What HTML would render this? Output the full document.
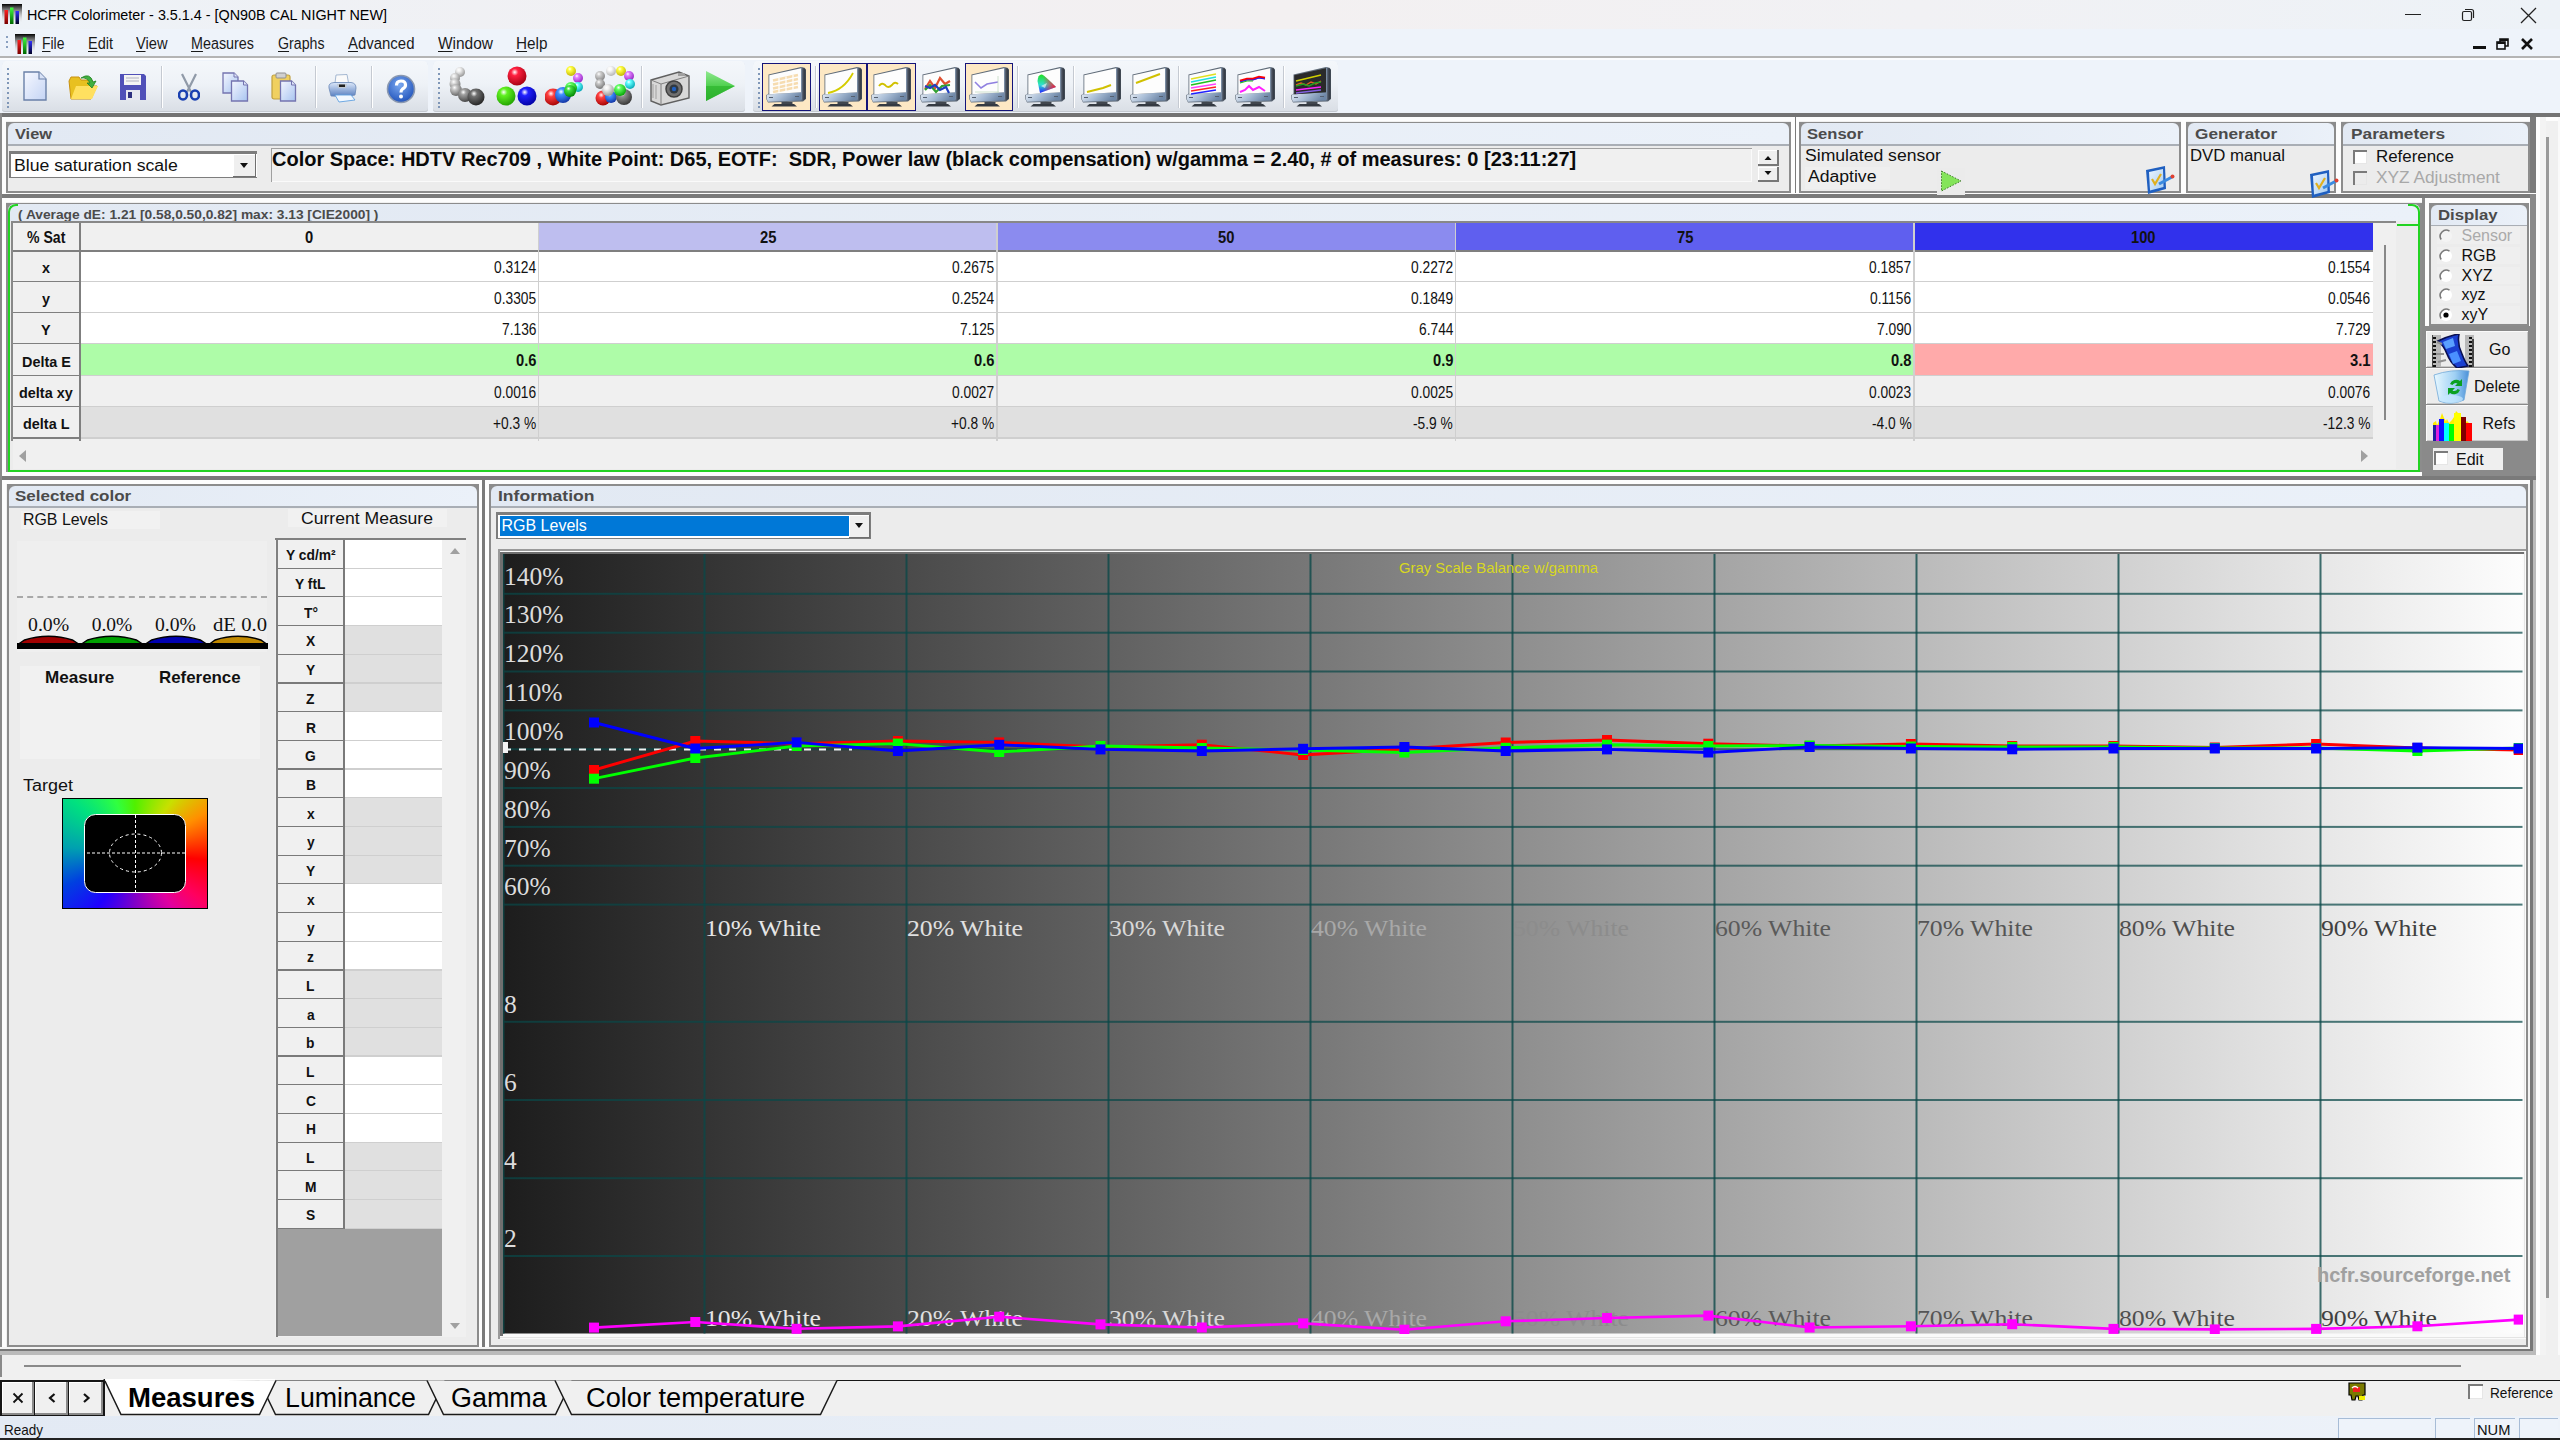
<!DOCTYPE html>
<html><head><meta charset="utf-8"><title>HCFR Colorimeter</title>
<style>
html,body{margin:0;padding:0;}
body{width:2560px;height:1440px;position:relative;overflow:hidden;background:#f0f0f0;font-family:"Liberation Sans",sans-serif;}
body>div,body>svg{position:absolute;}
div{box-sizing:border-box;}
u{text-decoration:underline;text-underline-offset:2px;text-decoration-thickness:1px;}
</style></head><body>
<div style="left:0;top:0;width:2560px;height:29px;background:linear-gradient(90deg,#edf2f7 0%,#f1f0f3 25%,#f3f0f1 50%,#f1f1f4 75%,#edf2f7 100%)"></div>
<svg style="position:absolute;left:2.0px;top:4.0px" width="20" height="20" viewBox="0 0 20 20"><defs><linearGradient id="ai2" x1="0" y1="0" x2="0" y2="1"><stop offset="0" stop-color="#000"/><stop offset="1" stop-color="#fff" stop-opacity="0"/></linearGradient><linearGradient id="ar2" x1="0" y1="0" x2="0" y2="1"><stop offset="0" stop-color="#ff2020"/><stop offset="1" stop-color="#700"/></linearGradient><linearGradient id="ag2" x1="0" y1="0" x2="0" y2="1"><stop offset="0" stop-color="#40ff40"/><stop offset="1" stop-color="#060"/></linearGradient><linearGradient id="ab2" x1="0" y1="0" x2="0" y2="1"><stop offset="0" stop-color="#3030ff"/><stop offset="1" stop-color="#002"/></linearGradient></defs><rect x="0" y="0" width="20" height="20" fill="url(#ai2)"/><rect x="2.5" y="6" width="3.5" height="14" fill="url(#ar2)"/><rect x="8" y="3.5" width="3.5" height="16.5" fill="url(#ag2)"/><rect x="13.5" y="7" width="3.5" height="13" fill="url(#ab2)"/></svg>
<div style="left:27.00px;top:7.30px;font:normal 15.00px/15.00px 'Liberation Sans',sans-serif;color:#000;white-space:pre;transform:scaleX(0.9576);transform-origin:0 0;">HCFR Colorimeter - 3.5.1.4 - [QN90B CAL NIGHT NEW]</div>
<div style="left:2405.00px;top:13.50px;width:16.00px;height:1.00px;background:#222;"></div>
<svg style="position:absolute;left:2459.00px;top:6.00px;" width="20" height="18" viewBox="0 0 20 18"><rect x="3.5" y="5.5" width="9" height="9" rx="1.5" fill="none" stroke="#222" stroke-width="1.2"/><path d="M6 3.5h6.5a2 2 0 0 1 2 2V12" fill="none" stroke="#222" stroke-width="1.2"/></svg>
<svg style="position:absolute;left:2518.00px;top:5.00px;" width="22" height="22" viewBox="0 0 22 22"><path d="M3 3L18 18M18 3L3 18" stroke="#222" stroke-width="1.3"/></svg>
<div style="left:0.00px;top:29.00px;width:2560.00px;height:27.00px;background:#eef3fa;"></div>
<div style="left:6.00px;top:36.00px;width:2.00px;height:2.00px;background:#8aa0c0;"></div>
<div style="left:6.00px;top:41.00px;width:2.00px;height:2.00px;background:#8aa0c0;"></div>
<div style="left:6.00px;top:46.00px;width:2.00px;height:2.00px;background:#8aa0c0;"></div>
<svg style="position:absolute;left:15.0px;top:34.0px" width="20" height="20" viewBox="0 0 20 20"><defs><linearGradient id="ai15" x1="0" y1="0" x2="0" y2="1"><stop offset="0" stop-color="#000"/><stop offset="1" stop-color="#fff" stop-opacity="0"/></linearGradient><linearGradient id="ar15" x1="0" y1="0" x2="0" y2="1"><stop offset="0" stop-color="#ff2020"/><stop offset="1" stop-color="#700"/></linearGradient><linearGradient id="ag15" x1="0" y1="0" x2="0" y2="1"><stop offset="0" stop-color="#40ff40"/><stop offset="1" stop-color="#060"/></linearGradient><linearGradient id="ab15" x1="0" y1="0" x2="0" y2="1"><stop offset="0" stop-color="#3030ff"/><stop offset="1" stop-color="#002"/></linearGradient></defs><rect x="0" y="0" width="20" height="20" fill="url(#ai15)"/><rect x="2.5" y="6" width="3.5" height="14" fill="url(#ar15)"/><rect x="8" y="3.5" width="3.5" height="16.5" fill="url(#ag15)"/><rect x="13.5" y="7" width="3.5" height="13" fill="url(#ab15)"/></svg>
<div style="left:41.50px;top:36.46px;font:normal 16.00px/16.00px 'Liberation Sans',sans-serif;color:#1a1a1a;white-space:pre;transform:scaleX(0.8717);transform-origin:0 0;"><u>F</u>ile</div>
<div style="left:87.50px;top:36.46px;font:normal 16.00px/16.00px 'Liberation Sans',sans-serif;color:#1a1a1a;white-space:pre;transform:scaleX(0.9060);transform-origin:0 0;"><u>E</u>dit</div>
<div style="left:136.00px;top:36.46px;font:normal 16.00px/16.00px 'Liberation Sans',sans-serif;color:#1a1a1a;white-space:pre;transform:scaleX(0.9151);transform-origin:0 0;"><u>V</u>iew</div>
<div style="left:191.00px;top:36.46px;font:normal 16.00px/16.00px 'Liberation Sans',sans-serif;color:#1a1a1a;white-space:pre;transform:scaleX(0.8964);transform-origin:0 0;"><u>M</u>easures</div>
<div style="left:277.50px;top:36.46px;font:normal 16.00px/16.00px 'Liberation Sans',sans-serif;color:#1a1a1a;white-space:pre;transform:scaleX(0.8857);transform-origin:0 0;"><u>G</u>raphs</div>
<div style="left:347.50px;top:36.46px;font:normal 16.00px/16.00px 'Liberation Sans',sans-serif;color:#1a1a1a;white-space:pre;transform:scaleX(0.9339);transform-origin:0 0;"><u>A</u>dvanced</div>
<div style="left:437.50px;top:36.46px;font:normal 16.00px/16.00px 'Liberation Sans',sans-serif;color:#1a1a1a;white-space:pre;transform:scaleX(0.9657);transform-origin:0 0;"><u>W</u>indow</div>
<div style="left:516.00px;top:36.46px;font:normal 16.00px/16.00px 'Liberation Sans',sans-serif;color:#1a1a1a;white-space:pre;transform:scaleX(0.9564);transform-origin:0 0;"><u>H</u>elp</div>
<div style="left:2473.00px;top:46.00px;width:13.00px;height:3.00px;background:#111;"></div>
<svg style="position:absolute;left:2495.00px;top:36.00px;" width="16" height="16" viewBox="0 0 16 16"><rect x="2" y="6" width="8" height="7" fill="none" stroke="#111" stroke-width="1.6"/><path d="M5 6V3h8v7h-3" fill="none" stroke="#111" stroke-width="1.6"/><rect x="2" y="6" width="8" height="2" fill="#111"/><rect x="5" y="3" width="8" height="2" fill="#111"/></svg>
<svg style="position:absolute;left:2519.00px;top:36.00px;" width="16" height="16" viewBox="0 0 16 16"><path d="M3 3L13 13M13 3L3 13" stroke="#111" stroke-width="2.6"/></svg>
<div style="left:0.00px;top:56.00px;width:2560.00px;height:2.00px;background:#b4b4b4;"></div>
<div style="left:0.00px;top:58.00px;width:2560.00px;height:2.00px;background:#fbfcfe;"></div>
<div style="left:0.00px;top:60.00px;width:2560.00px;height:53.00px;background:#eef3fa;"></div>
<div style="left:2px;top:61px;width:426px;height:51px;border-radius:5px 5px 3px 3px;background:linear-gradient(180deg,#f4f7fb 0%,#eef2f7 45%,#d9dee5 100%);box-shadow:inset 0 -1px 0 #c4c9d0"></div>
<div style="left:7.00px;top:68.00px;width:2.00px;height:2.00px;background:#7f97b8;"></div>
<div style="left:7.00px;top:72.80px;width:2.00px;height:2.00px;background:#7f97b8;"></div>
<div style="left:7.00px;top:77.60px;width:2.00px;height:2.00px;background:#7f97b8;"></div>
<div style="left:7.00px;top:82.40px;width:2.00px;height:2.00px;background:#7f97b8;"></div>
<div style="left:7.00px;top:87.20px;width:2.00px;height:2.00px;background:#7f97b8;"></div>
<div style="left:7.00px;top:92.00px;width:2.00px;height:2.00px;background:#7f97b8;"></div>
<div style="left:7.00px;top:96.80px;width:2.00px;height:2.00px;background:#7f97b8;"></div>
<div style="left:7.00px;top:101.60px;width:2.00px;height:2.00px;background:#7f97b8;"></div>
<div style="left:7.00px;top:106.40px;width:2.00px;height:2.00px;background:#7f97b8;"></div>
<div style="left:433px;top:61px;width:312px;height:51px;border-radius:5px 5px 3px 3px;background:linear-gradient(180deg,#f4f7fb 0%,#eef2f7 45%,#d9dee5 100%);box-shadow:inset 0 -1px 0 #c4c9d0"></div>
<div style="left:438.00px;top:68.00px;width:2.00px;height:2.00px;background:#7f97b8;"></div>
<div style="left:438.00px;top:72.80px;width:2.00px;height:2.00px;background:#7f97b8;"></div>
<div style="left:438.00px;top:77.60px;width:2.00px;height:2.00px;background:#7f97b8;"></div>
<div style="left:438.00px;top:82.40px;width:2.00px;height:2.00px;background:#7f97b8;"></div>
<div style="left:438.00px;top:87.20px;width:2.00px;height:2.00px;background:#7f97b8;"></div>
<div style="left:438.00px;top:92.00px;width:2.00px;height:2.00px;background:#7f97b8;"></div>
<div style="left:438.00px;top:96.80px;width:2.00px;height:2.00px;background:#7f97b8;"></div>
<div style="left:438.00px;top:101.60px;width:2.00px;height:2.00px;background:#7f97b8;"></div>
<div style="left:438.00px;top:106.40px;width:2.00px;height:2.00px;background:#7f97b8;"></div>
<div style="left:753px;top:61px;width:585px;height:51px;border-radius:5px 5px 3px 3px;background:linear-gradient(180deg,#f4f7fb 0%,#eef2f7 45%,#d9dee5 100%);box-shadow:inset 0 -1px 0 #c4c9d0"></div>
<div style="left:758.00px;top:68.00px;width:2.00px;height:2.00px;background:#7f97b8;"></div>
<div style="left:758.00px;top:72.80px;width:2.00px;height:2.00px;background:#7f97b8;"></div>
<div style="left:758.00px;top:77.60px;width:2.00px;height:2.00px;background:#7f97b8;"></div>
<div style="left:758.00px;top:82.40px;width:2.00px;height:2.00px;background:#7f97b8;"></div>
<div style="left:758.00px;top:87.20px;width:2.00px;height:2.00px;background:#7f97b8;"></div>
<div style="left:758.00px;top:92.00px;width:2.00px;height:2.00px;background:#7f97b8;"></div>
<div style="left:758.00px;top:96.80px;width:2.00px;height:2.00px;background:#7f97b8;"></div>
<div style="left:758.00px;top:101.60px;width:2.00px;height:2.00px;background:#7f97b8;"></div>
<div style="left:758.00px;top:106.40px;width:2.00px;height:2.00px;background:#7f97b8;"></div>
<div style="left:161.00px;top:66.00px;width:1.00px;height:42.00px;background:#c5cad2;"></div>
<div style="left:162.00px;top:66.00px;width:1.00px;height:42.00px;background:#ffffff;"></div>
<div style="left:315.00px;top:66.00px;width:1.00px;height:42.00px;background:#c5cad2;"></div>
<div style="left:316.00px;top:66.00px;width:1.00px;height:42.00px;background:#ffffff;"></div>
<div style="left:371.00px;top:66.00px;width:1.00px;height:42.00px;background:#c5cad2;"></div>
<div style="left:372.00px;top:66.00px;width:1.00px;height:42.00px;background:#ffffff;"></div>
<div style="left:641.00px;top:66.00px;width:1.00px;height:42.00px;background:#c5cad2;"></div>
<div style="left:642.00px;top:66.00px;width:1.00px;height:42.00px;background:#ffffff;"></div>
<div style="left:1017.00px;top:66.00px;width:1.00px;height:42.00px;background:#c5cad2;"></div>
<div style="left:1018.00px;top:66.00px;width:1.00px;height:42.00px;background:#ffffff;"></div>
<div style="left:1073.00px;top:66.00px;width:1.00px;height:42.00px;background:#c5cad2;"></div>
<div style="left:1074.00px;top:66.00px;width:1.00px;height:42.00px;background:#ffffff;"></div>
<div style="left:1178.00px;top:66.00px;width:1.00px;height:42.00px;background:#c5cad2;"></div>
<div style="left:1179.00px;top:66.00px;width:1.00px;height:42.00px;background:#ffffff;"></div>
<div style="left:1283.00px;top:66.00px;width:1.00px;height:42.00px;background:#c5cad2;"></div>
<div style="left:1284.00px;top:66.00px;width:1.00px;height:42.00px;background:#ffffff;"></div>
<div style="left:815.00px;top:66.00px;width:1.00px;height:42.00px;background:#c5cad2;"></div>
<div style="left:816.00px;top:66.00px;width:1.00px;height:42.00px;background:#ffffff;"></div>
<div style="left:0.00px;top:113.00px;width:2560.00px;height:4.00px;background:#737373;"></div>
<div style="left:0.00px;top:117.00px;width:2560.00px;height:4.00px;background:#fdfdfd;"></div>
<div style="left:6.00px;top:121.50px;width:1785.00px;height:71.50px;background:#8c8c8c;"></div>
<div style="left:8.0px;top:123.0px;width:1781.0px;height:21.0px;background:linear-gradient(90deg,#e2e9f3,#ebf1f9);border-radius:6px 6px 0 0"></div>
<div style="left:8.00px;top:144.00px;width:1781.00px;height:1.50px;background:#a9aeb5;"></div>
<div style="left:8.00px;top:145.50px;width:1781.00px;height:45.50px;background:#ececec;"></div>
<div style="left:15.00px;top:127.23px;font:bold 14.50px/14.50px 'Liberation Sans',sans-serif;color:#4b4b4b;white-space:pre;transform:scaleX(1.1287);transform-origin:0 0;">View</div>
<div style="left:8.50px;top:150.50px;width:248.50px;height:27.50px;background:#7d7d7d;"></div>
<div style="left:11.00px;top:153.50px;width:246.00px;height:23.50px;background:#ffffff;"></div>
<div style="left:233.00px;top:153.50px;width:23.00px;height:23.50px;background:#efefef;"></div>
<div style="left:233px;top:153.5px;width:23px;height:23.5px;box-shadow:inset -1px -1px 0 #6f6f6f,inset 1px 1px 0 #fff"></div>
<svg style="position:absolute;left:236.00px;top:159.00px;" width="16" height="12" viewBox="0 0 16 12"><path d="M4 4h8l-4 5z" fill="#111"/></svg>
<div style="left:14.00px;top:158.46px;font:normal 16.00px/16.00px 'Liberation Sans',sans-serif;color:#111;white-space:pre;transform:scaleX(1.1032);transform-origin:0 0;">Blue saturation scale</div>
<div style="left:270.50px;top:148.00px;width:1481.50px;height:33.50px;background:#f0f0f0;box-shadow:inset 1px 1px 0 #a0a0a0,inset -1px -1px 0 #fafafa"></div>
<div style="left:272.00px;top:149.47px;font:bold 20.00px/20.00px 'Liberation Sans',sans-serif;color:#0a0a0a;white-space:pre;">Color Space: HDTV Rec709 , White Point: D65, EOTF:  SDR, Power law (black compensation) w/gamma = 2.40, # of measures: 0 [23:11:27]</div>
<div style="left:1757.50px;top:150.00px;width:21.00px;height:15.50px;background:#efefef;box-shadow:inset -2px -2px 0 #777,inset 1px 1px 0 #fff"></div>
<svg style="position:absolute;left:1762.00px;top:153.00px;" width="12" height="9" viewBox="0 0 12 9"><path d="M2.5 7h7L6 3z" fill="#111"/></svg>
<div style="left:1757.50px;top:167.00px;width:21.00px;height:14.50px;background:#efefef;box-shadow:inset -2px -2px 0 #777,inset 1px 1px 0 #fff"></div>
<svg style="position:absolute;left:1762.00px;top:169.00px;" width="12" height="9" viewBox="0 0 12 9"><path d="M2.5 2h7L6 6z" fill="#111"/></svg>
<div style="left:1791.00px;top:117.00px;width:3.50px;height:78.00px;background:#fdfdfd;"></div>
<div style="left:1794.50px;top:117.00px;width:1.50px;height:78.00px;background:#7a7a7a;"></div>
<div style="left:1796.00px;top:117.00px;width:3.00px;height:78.00px;background:#fdfdfd;"></div>
<div style="left:1799.00px;top:121.50px;width:382.00px;height:71.50px;background:#8c8c8c;"></div>
<div style="left:1801.0px;top:123.0px;width:378.0px;height:21.0px;background:linear-gradient(90deg,#e2e9f3,#ebf1f9);border-radius:6px 6px 0 0"></div>
<div style="left:1801.00px;top:144.00px;width:378.00px;height:1.50px;background:#a9aeb5;"></div>
<div style="left:1801.00px;top:145.50px;width:378.00px;height:45.50px;background:#ececec;"></div>
<div style="left:1807.40px;top:127.23px;font:bold 14.50px/14.50px 'Liberation Sans',sans-serif;color:#4b4b4b;white-space:pre;transform:scaleX(1.1433);transform-origin:0 0;">Sensor</div>
<div style="left:1805.00px;top:147.96px;font:normal 16.00px/16.00px 'Liberation Sans',sans-serif;color:#111;white-space:pre;transform:scaleX(1.0994);transform-origin:0 0;">Simulated sensor</div>
<div style="left:1805.00px;top:167.00px;width:85.00px;height:22.00px;background:#efefef;"></div>
<div style="left:1807.50px;top:169.46px;font:normal 16.00px/16.00px 'Liberation Sans',sans-serif;color:#111;white-space:pre;transform:scaleX(1.0993);transform-origin:0 0;">Adaptive</div>
<div style="left:2181.00px;top:117.00px;width:5.00px;height:78.00px;background:#fdfdfd;"></div>
<div style="left:2186.00px;top:121.50px;width:149.50px;height:71.50px;background:#8c8c8c;"></div>
<div style="left:2188.0px;top:123.0px;width:145.5px;height:21.0px;background:linear-gradient(90deg,#e2e9f3,#ebf1f9);border-radius:6px 6px 0 0"></div>
<div style="left:2188.00px;top:144.00px;width:145.50px;height:1.50px;background:#a9aeb5;"></div>
<div style="left:2188.00px;top:145.50px;width:145.50px;height:45.50px;background:#ececec;"></div>
<div style="left:2195.40px;top:127.23px;font:bold 14.50px/14.50px 'Liberation Sans',sans-serif;color:#4b4b4b;white-space:pre;transform:scaleX(1.1862);transform-origin:0 0;">Generator</div>
<div style="left:2190.00px;top:148.46px;font:normal 16.00px/16.00px 'Liberation Sans',sans-serif;color:#111;white-space:pre;transform:scaleX(1.0467);transform-origin:0 0;">DVD manual</div>
<div style="left:2335.50px;top:117.00px;width:5.00px;height:78.00px;background:#fdfdfd;"></div>
<div style="left:2340.50px;top:121.50px;width:189.50px;height:71.50px;background:#8c8c8c;"></div>
<div style="left:2342.5px;top:123.0px;width:185.5px;height:21.0px;background:linear-gradient(90deg,#e2e9f3,#ebf1f9);border-radius:6px 6px 0 0"></div>
<div style="left:2342.50px;top:144.00px;width:185.50px;height:1.50px;background:#a9aeb5;"></div>
<div style="left:2342.50px;top:145.50px;width:185.50px;height:45.50px;background:#ececec;"></div>
<div style="left:2350.60px;top:127.23px;font:bold 14.50px/14.50px 'Liberation Sans',sans-serif;color:#4b4b4b;white-space:pre;transform:scaleX(1.1914);transform-origin:0 0;">Parameters</div>
<div style="left:2352.50px;top:149.50px;width:14.00px;height:14.00px;background:#ffffff;box-shadow:inset 2px 2px 0 #7b7b7b,inset -1px -1px 0 #e6e6e6"></div>
<div style="left:2376.00px;top:148.96px;font:normal 16.00px/16.00px 'Liberation Sans',sans-serif;color:#111;white-space:pre;transform:scaleX(1.0558);transform-origin:0 0;">Reference</div>
<div style="left:2352.50px;top:170.50px;width:14.00px;height:14.00px;background:#ececec;box-shadow:inset 2px 2px 0 #7b7b7b,inset -1px -1px 0 #e6e6e6"></div>
<div style="left:2376.00px;top:170.46px;font:normal 16.00px/16.00px 'Liberation Sans',sans-serif;color:#a8a8a8;white-space:pre;transform:scaleX(1.0802);transform-origin:0 0;">XYZ Adjustment</div>
<div style="left:2530.00px;top:117.00px;width:6.00px;height:82.00px;background:#7a7a7a;"></div>
<div style="left:0.00px;top:193.00px;width:2536.00px;height:1.40px;background:#fdfdfd;"></div>
<div style="left:0.00px;top:194.40px;width:2536.00px;height:4.00px;background:#7a7a7a;"></div>
<div style="left:0.00px;top:198.40px;width:2536.00px;height:4.10px;background:#fdfdfd;"></div>
<div style="left:1937.20px;top:168.00px;width:27.80px;height:27.00px;background:#ebebeb;"></div>
<svg style="position:absolute;left:1938.00px;top:168.00px;" width="28" height="26" viewBox="0 0 28 26"><path d="M3.5 3L23 13L3.5 23z" fill="#84e45a" stroke="#3c7a28" stroke-width="1" stroke-dasharray="1.5 1.5"/></svg>
<svg style="position:absolute;left:2144.00px;top:164.00px;" width="32" height="32" viewBox="0 0 32 32"><defs><linearGradient id="eg2144" x1="0" y1="0" x2="1" y2="1"><stop offset="0" stop-color="#eaf4ff"/><stop offset="1" stop-color="#a8cdf0"/></linearGradient></defs><path d="M2 6L21 2L22 25L4 30z" fill="#1f5fc0"/><path d="M5 8L19 5L19.5 23L6 26.5z" fill="url(#eg2144)"/><path d="M8 15l3 5l6-10" fill="none" stroke="#e0b020" stroke-width="2.2"/><path d="M15 20L28 13" stroke="#3a8ae0" stroke-width="3"/><circle cx="28.5" cy="12.5" r="2" fill="#e04030"/></svg>
<svg style="position:absolute;left:2307.50px;top:168.00px;" width="32" height="32" viewBox="0 0 32 32"><defs><linearGradient id="eg2307" x1="0" y1="0" x2="1" y2="1"><stop offset="0" stop-color="#eaf4ff"/><stop offset="1" stop-color="#a8cdf0"/></linearGradient></defs><path d="M2 6L21 2L22 25L4 30z" fill="#1f5fc0"/><path d="M5 8L19 5L19.5 23L6 26.5z" fill="url(#eg2307)"/><path d="M8 15l3 5l6-10" fill="none" stroke="#e0b020" stroke-width="2.2"/><path d="M15 20L28 13" stroke="#3a8ae0" stroke-width="3"/><circle cx="28.5" cy="12.5" r="2" fill="#e04030"/></svg>
<svg style="position:absolute;left:23.00px;top:71.00px;" width="24" height="30" viewBox="0 0 24 30"><defs><linearGradient id="g1" x1="0" y1="0" x2="1" y2="1"><stop offset="0" stop-color="#f6f8ff"/><stop offset="1" stop-color="#c4d4f4"/></linearGradient></defs><path d="M1 1H16L23 8V29H1z" fill="url(#g1)" stroke="#6a80a8" stroke-width="1.4"/><path d="M16 1V8H23" fill="#d8e2f6" stroke="#6a80a8" stroke-width="1.2"/></svg>
<svg style="position:absolute;left:68.00px;top:73.00px;" width="32" height="28" viewBox="0 0 32 28"><path d="M1 8L3 4H11L13 7H24V13L29 13L23 26H3z" fill="#e8c020" stroke="#c89010" stroke-width="1"/><path d="M3 26L8 13H30L24 26z" fill="#ffe060"/><path d="M13 5Q22 -1 25 9L28 8L24 15L19 10L22 10Q19 4 13 5z" fill="#40b040" stroke="#208020" stroke-width="0.8"/></svg>
<svg style="position:absolute;left:119.00px;top:73.00px;" width="28" height="28" viewBox="0 0 28 28"><path d="M1 1H25L27 3V27H1z" fill="#5050b8"/><rect x="5" y="2" width="17" height="10" fill="#f4f4f4"/><path d="M7 5H20M7 8H20" stroke="#b0b0c0" stroke-width="1"/><rect x="7" y="17" width="14" height="10" fill="#e8e8f0"/><rect x="9" y="19" width="4" height="6" fill="#303080"/></svg>
<svg style="position:absolute;left:178.00px;top:73.00px;" width="22" height="28" viewBox="0 0 22 28"><path d="M4 1L13 19M18 1L9 19" stroke="#909aa8" stroke-width="2.2"/><ellipse cx="5" cy="22" rx="4" ry="4.5" fill="none" stroke="#1a40b0" stroke-width="2.6"/><ellipse cx="17" cy="22" rx="4" ry="4.5" fill="none" stroke="#1a40b0" stroke-width="2.6"/></svg>
<svg style="position:absolute;left:222.00px;top:72.00px;" width="28" height="30" viewBox="0 0 28 30"><defs><linearGradient id="g2" x1="0" y1="0" x2="1" y2="1"><stop offset="0" stop-color="#f4f6ff"/><stop offset="1" stop-color="#a8c4f0"/></linearGradient></defs><path d="M1.0 1.0H12.0L16.0 5.0V21.0H1.0z" fill="url(#g2)" stroke="#7474b0" stroke-width="1.3"/><path d="M12.0 1.0V5.0H16.0" fill="#dde4f8" stroke="#7474b0" stroke-width="1"/><defs><linearGradient id="g3" x1="0" y1="0" x2="1" y2="1"><stop offset="0" stop-color="#f4f6ff"/><stop offset="1" stop-color="#a8c4f0"/></linearGradient></defs><path d="M9.5 9.0H21.5L25.5 13.0V29.0H9.5z" fill="url(#g3)" stroke="#7474b0" stroke-width="1.3"/><path d="M21.5 9.0V13.0H25.5" fill="#dde4f8" stroke="#7474b0" stroke-width="1"/></svg>
<svg style="position:absolute;left:271.00px;top:72.00px;" width="28" height="30" viewBox="0 0 28 30"><rect x="1" y="3" width="18" height="24" rx="2" fill="#f0d060" stroke="#c0a040" stroke-width="1.2"/><rect x="5" y="1" width="10" height="5" rx="1" fill="#d0d0d0" stroke="#909090"/><defs><linearGradient id="g4" x1="0" y1="0" x2="1" y2="1"><stop offset="0" stop-color="#f4f6ff"/><stop offset="1" stop-color="#a8c4f0"/></linearGradient></defs><path d="M9.5 9.0H20.5L24.5 13.0V29.0H9.5z" fill="url(#g4)" stroke="#7474b0" stroke-width="1.3"/><path d="M20.5 9.0V13.0H24.5" fill="#dde4f8" stroke="#7474b0" stroke-width="1"/></svg>
<svg style="position:absolute;left:327.00px;top:73.00px;" width="30" height="30" viewBox="0 0 30 30"><defs><linearGradient id="g5" x1="0" y1="0" x2="0" y2="1"><stop offset="0" stop-color="#dce8fa"/><stop offset="1" stop-color="#5a80c0"/></linearGradient></defs><path d="M9 2L20 1.5L21.5 10H8z" fill="#fafafa" stroke="#90a8c8" stroke-width="0.8"/><path d="M2 15Q1 10 7 9.5H24Q29 10 29 15L28 22Q20 24 4 23z" fill="url(#g5)" stroke="#6a88b8" stroke-width="0.8"/><path d="M10 11H20L19 15H11z" fill="#c0c8d0"/><rect x="12" y="11.5" width="6" height="2.5" fill="#202020"/><path d="M8 22H24L28 27L12 29z" fill="#f2f8ff" stroke="#60a0e0" stroke-width="0.9"/></svg>
<svg style="position:absolute;left:386.00px;top:74.00px;" width="30" height="30" viewBox="0 0 30 30"><defs><radialGradient id="g6" cx="0.45" cy="0.35" r="0.7"><stop offset="0" stop-color="#7aa8f0"/><stop offset="1" stop-color="#1d4fb8"/></radialGradient></defs><circle cx="15" cy="15" r="13.5" fill="url(#g6)" stroke="#8a98b0" stroke-width="1.6"/><path d="M10.5 11.5Q10.5 7 15 7Q19.5 7 19.5 11Q19.5 13.5 16.5 15Q15 16 15 18.5" fill="none" stroke="#fff" stroke-width="3.2"/><circle cx="15" cy="22.5" r="2" fill="#fff"/></svg>
<svg style="position:absolute;left:446.50px;top:66.00px;" width="42" height="41" viewBox="0 0 42 41"><defs><radialGradient id="g7" cx="0.38" cy="0.3" r="0.75"><stop offset="0" stop-color="#ffffff"/><stop offset="0.25" stop-color="#f0f0f0"/><stop offset="1" stop-color="#909090"/></radialGradient></defs><circle cx="13.0" cy="6.0" r="5.0" fill="url(#g7)"/><defs><radialGradient id="g8" cx="0.38" cy="0.3" r="0.75"><stop offset="0" stop-color="#ffffff"/><stop offset="0.25" stop-color="#e0e0e0"/><stop offset="1" stop-color="#808080"/></radialGradient></defs><circle cx="8.0" cy="12.0" r="5.0" fill="url(#g8)"/><defs><radialGradient id="g9" cx="0.38" cy="0.3" r="0.75"><stop offset="0" stop-color="#ffffff"/><stop offset="0.25" stop-color="#d8d8d8"/><stop offset="1" stop-color="#707070"/></radialGradient></defs><circle cx="8.0" cy="18.0" r="5.5" fill="url(#g9)"/><defs><radialGradient id="g10" cx="0.38" cy="0.3" r="0.75"><stop offset="0" stop-color="#ffffff"/><stop offset="0.25" stop-color="#c8c8c8"/><stop offset="1" stop-color="#606060"/></radialGradient></defs><circle cx="9.0" cy="24.0" r="6.0" fill="url(#g10)"/><defs><radialGradient id="g11" cx="0.38" cy="0.3" r="0.75"><stop offset="0" stop-color="#ffffff"/><stop offset="0.25" stop-color="#a0a0a0"/><stop offset="1" stop-color="#404040"/></radialGradient></defs><circle cx="18.0" cy="29.0" r="7.0" fill="url(#g11)"/><defs><radialGradient id="g12" cx="0.38" cy="0.3" r="0.75"><stop offset="0" stop-color="#ffffff"/><stop offset="0.25" stop-color="#707070"/><stop offset="1" stop-color="#202020"/></radialGradient></defs><circle cx="29.0" cy="31.0" r="8.5" fill="url(#g12)"/></svg>
<svg style="position:absolute;left:495.50px;top:66.00px;" width="42" height="41" viewBox="0 0 42 41"><defs><radialGradient id="g13" cx="0.38" cy="0.3" r="0.75"><stop offset="0" stop-color="#ffffff"/><stop offset="0.25" stop-color="#ff2040"/><stop offset="1" stop-color="#a00010"/></radialGradient></defs><circle cx="21.0" cy="10.0" r="9.5" fill="url(#g13)"/><defs><radialGradient id="g14" cx="0.38" cy="0.3" r="0.75"><stop offset="0" stop-color="#ffffff"/><stop offset="0.25" stop-color="#60f020"/><stop offset="1" stop-color="#20a000"/></radialGradient></defs><circle cx="10.0" cy="30.0" r="9.5" fill="url(#g14)"/><defs><radialGradient id="g15" cx="0.38" cy="0.3" r="0.75"><stop offset="0" stop-color="#ffffff"/><stop offset="0.25" stop-color="#2020ff"/><stop offset="1" stop-color="#0000a0"/></radialGradient></defs><circle cx="31.0" cy="30.0" r="9.5" fill="url(#g15)"/></svg>
<svg style="position:absolute;left:544.50px;top:66.00px;" width="42" height="41" viewBox="0 0 42 41"><defs><radialGradient id="g16" cx="0.38" cy="0.3" r="0.75"><stop offset="0" stop-color="#ffffff"/><stop offset="0.25" stop-color="#ffff40"/><stop offset="1" stop-color="#c0b000"/></radialGradient></defs><circle cx="26.0" cy="5.0" r="5.0" fill="url(#g16)"/><defs><radialGradient id="g17" cx="0.38" cy="0.3" r="0.75"><stop offset="0" stop-color="#ffffff"/><stop offset="0.25" stop-color="#e080ff"/><stop offset="1" stop-color="#9020c0"/></radialGradient></defs><circle cx="33.0" cy="12.0" r="5.0" fill="url(#g17)"/><defs><radialGradient id="g18" cx="0.38" cy="0.3" r="0.75"><stop offset="0" stop-color="#ffffff"/><stop offset="0.25" stop-color="#60ffff"/><stop offset="1" stop-color="#00a0b0"/></radialGradient></defs><circle cx="33.0" cy="21.0" r="5.0" fill="url(#g18)"/><defs><radialGradient id="g19" cx="0.38" cy="0.3" r="0.75"><stop offset="0" stop-color="#ffffff"/><stop offset="0.25" stop-color="#60ff60"/><stop offset="1" stop-color="#00a000"/></radialGradient></defs><circle cx="26.0" cy="22.0" r="6.0" fill="url(#g19)"/><defs><radialGradient id="g20" cx="0.38" cy="0.3" r="0.75"><stop offset="0" stop-color="#ffffff"/><stop offset="0.25" stop-color="#ff4040"/><stop offset="1" stop-color="#a00000"/></radialGradient></defs><circle cx="8.0" cy="31.0" r="8.5" fill="url(#g20)"/><defs><radialGradient id="g21" cx="0.38" cy="0.3" r="0.75"><stop offset="0" stop-color="#ffffff"/><stop offset="0.25" stop-color="#4090ff"/><stop offset="1" stop-color="#1030a0"/></radialGradient></defs><circle cx="18.0" cy="29.0" r="8.0" fill="url(#g21)"/><defs><radialGradient id="g22" cx="0.38" cy="0.3" r="0.75"><stop offset="0" stop-color="#ffffff"/><stop offset="0.25" stop-color="#40e040"/><stop offset="1" stop-color="#008000"/></radialGradient></defs><circle cx="25.0" cy="25.0" r="6.0" fill="url(#g22)"/></svg>
<svg style="position:absolute;left:593.50px;top:66.00px;" width="42" height="41" viewBox="0 0 42 41"><defs><radialGradient id="g23" cx="0.38" cy="0.3" r="0.75"><stop offset="0" stop-color="#ffffff"/><stop offset="0.25" stop-color="#d0d0d0"/><stop offset="1" stop-color="#808080"/></radialGradient></defs><circle cx="6.0" cy="10.0" r="5.0" fill="url(#g23)"/><defs><radialGradient id="g24" cx="0.38" cy="0.3" r="0.75"><stop offset="0" stop-color="#ffffff"/><stop offset="0.25" stop-color="#f8f8f8"/><stop offset="1" stop-color="#b0b0b0"/></radialGradient></defs><circle cx="17.0" cy="5.0" r="5.0" fill="url(#g24)"/><defs><radialGradient id="g25" cx="0.38" cy="0.3" r="0.75"><stop offset="0" stop-color="#ffffff"/><stop offset="0.25" stop-color="#ffff40"/><stop offset="1" stop-color="#c0b000"/></radialGradient></defs><circle cx="27.0" cy="5.0" r="5.0" fill="url(#g25)"/><defs><radialGradient id="g26" cx="0.38" cy="0.3" r="0.75"><stop offset="0" stop-color="#ffffff"/><stop offset="0.25" stop-color="#e080ff"/><stop offset="1" stop-color="#9020c0"/></radialGradient></defs><circle cx="35.0" cy="10.0" r="5.0" fill="url(#g26)"/><defs><radialGradient id="g27" cx="0.38" cy="0.3" r="0.75"><stop offset="0" stop-color="#ffffff"/><stop offset="0.25" stop-color="#60ffff"/><stop offset="1" stop-color="#00a0b0"/></radialGradient></defs><circle cx="36.0" cy="18.0" r="5.0" fill="url(#g27)"/><defs><radialGradient id="g28" cx="0.38" cy="0.3" r="0.75"><stop offset="0" stop-color="#ffffff"/><stop offset="0.25" stop-color="#c8c8c8"/><stop offset="1" stop-color="#707070"/></radialGradient></defs><circle cx="6.0" cy="18.0" r="5.0" fill="url(#g28)"/><defs><radialGradient id="g29" cx="0.38" cy="0.3" r="0.75"><stop offset="0" stop-color="#ffffff"/><stop offset="0.25" stop-color="#ff4040"/><stop offset="1" stop-color="#a00000"/></radialGradient></defs><circle cx="9.0" cy="32.0" r="7.5" fill="url(#g29)"/><defs><radialGradient id="g30" cx="0.38" cy="0.3" r="0.75"><stop offset="0" stop-color="#ffffff"/><stop offset="0.25" stop-color="#4090ff"/><stop offset="1" stop-color="#1030a0"/></radialGradient></defs><circle cx="17.0" cy="31.0" r="6.0" fill="url(#g30)"/><defs><radialGradient id="g31" cx="0.38" cy="0.3" r="0.75"><stop offset="0" stop-color="#ffffff"/><stop offset="0.25" stop-color="#909090"/><stop offset="1" stop-color="#303030"/></radialGradient></defs><circle cx="30.0" cy="31.0" r="8.0" fill="url(#g31)"/><defs><radialGradient id="g32" cx="0.38" cy="0.3" r="0.75"><stop offset="0" stop-color="#ffffff"/><stop offset="0.25" stop-color="#f0f0f0"/><stop offset="1" stop-color="#909090"/></radialGradient></defs><circle cx="14.0" cy="24.0" r="6.0" fill="url(#g32)"/><defs><radialGradient id="g33" cx="0.38" cy="0.3" r="0.75"><stop offset="0" stop-color="#ffffff"/><stop offset="0.25" stop-color="#60ff60"/><stop offset="1" stop-color="#00a000"/></radialGradient></defs><circle cx="26.0" cy="24.0" r="6.0" fill="url(#g33)"/></svg>
<svg style="position:absolute;left:649.00px;top:68.00px;" width="42" height="38" viewBox="0 0 42 38"><path d="M2 12L30 4L40 8L40 30L12 37L2 33z" fill="#d8d8d8" stroke="#606060" stroke-width="1.4"/><path d="M2 12L12 16L40 8M12 16V37" fill="none" stroke="#808080" stroke-width="1"/><path d="M4 16V30M7 17V31" stroke="#a0a0a0"/><circle cx="25" cy="21" r="8" fill="#707070" stroke="#404040" stroke-width="1.5"/><circle cx="25" cy="21" r="4.5" fill="#303840"/><circle cx="25" cy="21" r="2.2" fill="#2060c0"/><rect x="29" y="5" width="7" height="3" fill="#a0a0a0"/></svg>
<svg style="position:absolute;left:704.00px;top:69.00px;" width="32" height="33" viewBox="0 0 32 33"><defs><linearGradient id="g34" x1="0" y1="0" x2="0" y2="1"><stop offset="0" stop-color="#90e890"/><stop offset="0.5" stop-color="#50d050"/><stop offset="1" stop-color="#30b030"/></linearGradient></defs><path d="M2 2L31 17L2 32z" fill="url(#g34)"/><path d="M2 17L31 17L2 32z" fill="#28b028" opacity="0.6"/></svg>
<div style="left:762.00px;top:62.70px;width:49.00px;height:48.70px;background:#fde8c4;border:1.5px solid #14147a"></div>
<div style="left:818.70px;top:62.70px;width:48.10px;height:48.70px;background:#fde8c4;border:1.5px solid #14147a"></div>
<div style="left:866.80px;top:62.70px;width:49.20px;height:48.70px;background:#fde8c4;border:1.5px solid #14147a"></div>
<div style="left:965.00px;top:62.70px;width:48.00px;height:48.70px;background:#fde8c4;border:1.5px solid #14147a"></div>
<svg style="position:absolute;left:766.00px;top:65.70px;" width="41" height="41" viewBox="0 0 41 41"><defs><linearGradient id="g35" x1="0" y1="0" x2="1" y2="0.3"><stop offset="0" stop-color="#e4ebf3"/><stop offset="0.5" stop-color="#a9bdd6"/><stop offset="1" stop-color="#6d86a6"/></linearGradient><linearGradient id="g35d" x1="0" y1="0" x2="1" y2="0"><stop offset="0" stop-color="#8aa0ba"/><stop offset="0.4" stop-color="#4a5260"/><stop offset="1" stop-color="#2a3038"/></linearGradient></defs><path d="M2.5 8.5L35 1L38.5 1.8L40 3.5V33L37 35.5L2 36.5L0.3 33V29L2.5 27.5z" fill="#5f6b78"/><path d="M35 1.5L38.5 2.3L39.6 4V32.8L36.5 35L35 33z" fill="url(#g35d)"/><path d="M1 28.5L35.2 26.2V34.6L2 35.8L0.8 33z" fill="url(#g35)"/><path d="M3 31.5h4M29 30.5h4" stroke="#556070" stroke-width="1.2"/><path d="M3.3 9.3L35 2.2V26.2L3.3 28.3z" fill="#fdfdfd"/><rect x="15.5" y="36" width="11" height="2.2" fill="#40464e"/><path d="M5.5 40.6L8.5 38H28L31 40.6z" fill="#343a42"/><path d="M7 14.5L32 9M7 18.5L32 13M7 22.5L32 17M7 26L32 21" stroke="#f6dcb0" stroke-width="2.6"/><path d="M13 12V27M20 10.5V26M27 9V24" stroke="#fff" stroke-width="1.2"/></svg>
<svg style="position:absolute;left:822.00px;top:65.70px;" width="41" height="41" viewBox="0 0 41 41"><defs><linearGradient id="g36" x1="0" y1="0" x2="1" y2="0.3"><stop offset="0" stop-color="#e4ebf3"/><stop offset="0.5" stop-color="#a9bdd6"/><stop offset="1" stop-color="#6d86a6"/></linearGradient><linearGradient id="g36d" x1="0" y1="0" x2="1" y2="0"><stop offset="0" stop-color="#8aa0ba"/><stop offset="0.4" stop-color="#4a5260"/><stop offset="1" stop-color="#2a3038"/></linearGradient></defs><path d="M2.5 8.5L35 1L38.5 1.8L40 3.5V33L37 35.5L2 36.5L0.3 33V29L2.5 27.5z" fill="#5f6b78"/><path d="M35 1.5L38.5 2.3L39.6 4V32.8L36.5 35L35 33z" fill="url(#g36d)"/><path d="M1 28.5L35.2 26.2V34.6L2 35.8L0.8 33z" fill="url(#g36)"/><path d="M3 31.5h4M29 30.5h4" stroke="#556070" stroke-width="1.2"/><path d="M3.3 9.3L35 2.2V26.2L3.3 28.3z" fill="#fdfdfd"/><rect x="15.5" y="36" width="11" height="2.2" fill="#40464e"/><path d="M5.5 40.6L8.5 38H28L31 40.6z" fill="#343a42"/><path d="M6 27Q22 24 31 7" fill="none" stroke="#d4cc00" stroke-width="1.8"/></svg>
<svg style="position:absolute;left:870.50px;top:65.70px;" width="41" height="41" viewBox="0 0 41 41"><defs><linearGradient id="g37" x1="0" y1="0" x2="1" y2="0.3"><stop offset="0" stop-color="#e4ebf3"/><stop offset="0.5" stop-color="#a9bdd6"/><stop offset="1" stop-color="#6d86a6"/></linearGradient><linearGradient id="g37d" x1="0" y1="0" x2="1" y2="0"><stop offset="0" stop-color="#8aa0ba"/><stop offset="0.4" stop-color="#4a5260"/><stop offset="1" stop-color="#2a3038"/></linearGradient></defs><path d="M2.5 8.5L35 1L38.5 1.8L40 3.5V33L37 35.5L2 36.5L0.3 33V29L2.5 27.5z" fill="#5f6b78"/><path d="M35 1.5L38.5 2.3L39.6 4V32.8L36.5 35L35 33z" fill="url(#g37d)"/><path d="M1 28.5L35.2 26.2V34.6L2 35.8L0.8 33z" fill="url(#g37)"/><path d="M3 31.5h4M29 30.5h4" stroke="#556070" stroke-width="1.2"/><path d="M3.3 9.3L35 2.2V26.2L3.3 28.3z" fill="#fdfdfd"/><rect x="15.5" y="36" width="11" height="2.2" fill="#40464e"/><path d="M5.5 40.6L8.5 38H28L31 40.6z" fill="#343a42"/><path d="M8 20Q11 16 14 19Q17 23 21 19Q24 15 27 18" fill="none" stroke="#d0c000" stroke-width="2"/></svg>
<svg style="position:absolute;left:920.00px;top:65.70px;" width="41" height="41" viewBox="0 0 41 41"><defs><linearGradient id="g38" x1="0" y1="0" x2="1" y2="0.3"><stop offset="0" stop-color="#e4ebf3"/><stop offset="0.5" stop-color="#a9bdd6"/><stop offset="1" stop-color="#6d86a6"/></linearGradient><linearGradient id="g38d" x1="0" y1="0" x2="1" y2="0"><stop offset="0" stop-color="#8aa0ba"/><stop offset="0.4" stop-color="#4a5260"/><stop offset="1" stop-color="#2a3038"/></linearGradient></defs><path d="M2.5 8.5L35 1L38.5 1.8L40 3.5V33L37 35.5L2 36.5L0.3 33V29L2.5 27.5z" fill="#5f6b78"/><path d="M35 1.5L38.5 2.3L39.6 4V32.8L36.5 35L35 33z" fill="url(#g38d)"/><path d="M1 28.5L35.2 26.2V34.6L2 35.8L0.8 33z" fill="url(#g38)"/><path d="M3 31.5h4M29 30.5h4" stroke="#556070" stroke-width="1.2"/><path d="M3.3 9.3L35 2.2V26.2L3.3 28.3z" fill="#fdfdfd"/><rect x="15.5" y="36" width="11" height="2.2" fill="#40464e"/><path d="M5.5 40.6L8.5 38H28L31 40.6z" fill="#343a42"/><path d="M5 23L10 15L15 22L20 12L25 18L30 15" fill="none" stroke="#e05030" stroke-width="2.2"/><path d="M5 24L10 19L16 26L22 20L30 19" fill="none" stroke="#30a030" stroke-width="2.2"/><path d="M5 20L10 22L15 19L20 24L26 21L29 27" fill="none" stroke="#2040c0" stroke-width="2.2"/></svg>
<svg style="position:absolute;left:969.00px;top:65.70px;" width="41" height="41" viewBox="0 0 41 41"><defs><linearGradient id="g39" x1="0" y1="0" x2="1" y2="0.3"><stop offset="0" stop-color="#e4ebf3"/><stop offset="0.5" stop-color="#a9bdd6"/><stop offset="1" stop-color="#6d86a6"/></linearGradient><linearGradient id="g39d" x1="0" y1="0" x2="1" y2="0"><stop offset="0" stop-color="#8aa0ba"/><stop offset="0.4" stop-color="#4a5260"/><stop offset="1" stop-color="#2a3038"/></linearGradient></defs><path d="M2.5 8.5L35 1L38.5 1.8L40 3.5V33L37 35.5L2 36.5L0.3 33V29L2.5 27.5z" fill="#5f6b78"/><path d="M35 1.5L38.5 2.3L39.6 4V32.8L36.5 35L35 33z" fill="url(#g39d)"/><path d="M1 28.5L35.2 26.2V34.6L2 35.8L0.8 33z" fill="url(#g39)"/><path d="M3 31.5h4M29 30.5h4" stroke="#556070" stroke-width="1.2"/><path d="M3.3 9.3L35 2.2V26.2L3.3 28.3z" fill="#fdfdfd"/><rect x="15.5" y="36" width="11" height="2.2" fill="#40464e"/><path d="M5.5 40.6L8.5 38H28L31 40.6z" fill="#343a42"/><path d="M6 16L12 22L18 18L29 16" fill="none" stroke="#9080e0" stroke-width="1.6"/><path d="M6 26H30M29 10V27" stroke="#c0d8c0" stroke-width="0.8"/></svg>
<svg style="position:absolute;left:1025.00px;top:65.70px;" width="41" height="41" viewBox="0 0 41 41"><defs><linearGradient id="g40" x1="0" y1="0" x2="1" y2="0.3"><stop offset="0" stop-color="#e4ebf3"/><stop offset="0.5" stop-color="#a9bdd6"/><stop offset="1" stop-color="#6d86a6"/></linearGradient><linearGradient id="g40d" x1="0" y1="0" x2="1" y2="0"><stop offset="0" stop-color="#8aa0ba"/><stop offset="0.4" stop-color="#4a5260"/><stop offset="1" stop-color="#2a3038"/></linearGradient></defs><path d="M2.5 8.5L35 1L38.5 1.8L40 3.5V33L37 35.5L2 36.5L0.3 33V29L2.5 27.5z" fill="#5f6b78"/><path d="M35 1.5L38.5 2.3L39.6 4V32.8L36.5 35L35 33z" fill="url(#g40d)"/><path d="M1 28.5L35.2 26.2V34.6L2 35.8L0.8 33z" fill="url(#g40)"/><path d="M3 31.5h4M29 30.5h4" stroke="#556070" stroke-width="1.2"/><path d="M3.3 9.3L35 2.2V26.2L3.3 28.3z" fill="#fdfdfd"/><rect x="15.5" y="36" width="11" height="2.2" fill="#40464e"/><path d="M5.5 40.6L8.5 38H28L31 40.6z" fill="#343a42"/><defs><linearGradient id="cie1" x1="0" y1="0" x2="0" y2="1"><stop offset="0" stop-color="#20e020"/><stop offset="0.55" stop-color="#30e0d0"/><stop offset="1" stop-color="#2020ff"/></linearGradient><linearGradient id="cie2" x1="0" y1="0" x2="1" y2="0"><stop offset="0.3" stop-color="#ff2020" stop-opacity="0"/><stop offset="1" stop-color="#ff1030" stop-opacity="1"/></linearGradient></defs><path d="M15 27L12.5 15Q13 8 17 8.5Q20 10 31 21z" fill="url(#cie1)"/><path d="M15 27L12.5 15Q13 8 17 8.5Q20 10 31 21z" fill="url(#cie2)"/><path d="M16 20L22 17L20 22z" fill="#fff" opacity="0.6"/></svg>
<svg style="position:absolute;left:1080.50px;top:65.70px;" width="41" height="41" viewBox="0 0 41 41"><defs><linearGradient id="g41" x1="0" y1="0" x2="1" y2="0.3"><stop offset="0" stop-color="#e4ebf3"/><stop offset="0.5" stop-color="#a9bdd6"/><stop offset="1" stop-color="#6d86a6"/></linearGradient><linearGradient id="g41d" x1="0" y1="0" x2="1" y2="0"><stop offset="0" stop-color="#8aa0ba"/><stop offset="0.4" stop-color="#4a5260"/><stop offset="1" stop-color="#2a3038"/></linearGradient></defs><path d="M2.5 8.5L35 1L38.5 1.8L40 3.5V33L37 35.5L2 36.5L0.3 33V29L2.5 27.5z" fill="#5f6b78"/><path d="M35 1.5L38.5 2.3L39.6 4V32.8L36.5 35L35 33z" fill="url(#g41d)"/><path d="M1 28.5L35.2 26.2V34.6L2 35.8L0.8 33z" fill="url(#g41)"/><path d="M3 31.5h4M29 30.5h4" stroke="#556070" stroke-width="1.2"/><path d="M3.3 9.3L35 2.2V26.2L3.3 28.3z" fill="#fdfdfd"/><rect x="15.5" y="36" width="11" height="2.2" fill="#40464e"/><path d="M5.5 40.6L8.5 38H28L31 40.6z" fill="#343a42"/><path d="M6 26L14 24L22 22L30 19" fill="none" stroke="#d0c000" stroke-width="2"/></svg>
<svg style="position:absolute;left:1129.50px;top:65.70px;" width="41" height="41" viewBox="0 0 41 41"><defs><linearGradient id="g42" x1="0" y1="0" x2="1" y2="0.3"><stop offset="0" stop-color="#e4ebf3"/><stop offset="0.5" stop-color="#a9bdd6"/><stop offset="1" stop-color="#6d86a6"/></linearGradient><linearGradient id="g42d" x1="0" y1="0" x2="1" y2="0"><stop offset="0" stop-color="#8aa0ba"/><stop offset="0.4" stop-color="#4a5260"/><stop offset="1" stop-color="#2a3038"/></linearGradient></defs><path d="M2.5 8.5L35 1L38.5 1.8L40 3.5V33L37 35.5L2 36.5L0.3 33V29L2.5 27.5z" fill="#5f6b78"/><path d="M35 1.5L38.5 2.3L39.6 4V32.8L36.5 35L35 33z" fill="url(#g42d)"/><path d="M1 28.5L35.2 26.2V34.6L2 35.8L0.8 33z" fill="url(#g42)"/><path d="M3 31.5h4M29 30.5h4" stroke="#556070" stroke-width="1.2"/><path d="M3.3 9.3L35 2.2V26.2L3.3 28.3z" fill="#fdfdfd"/><rect x="15.5" y="36" width="11" height="2.2" fill="#40464e"/><path d="M5.5 40.6L8.5 38H28L31 40.6z" fill="#343a42"/><path d="M6 17L14 14L22 11L30 8" fill="none" stroke="#d0c000" stroke-width="2"/></svg>
<svg style="position:absolute;left:1186.00px;top:65.70px;" width="41" height="41" viewBox="0 0 41 41"><defs><linearGradient id="g43" x1="0" y1="0" x2="1" y2="0.3"><stop offset="0" stop-color="#e4ebf3"/><stop offset="0.5" stop-color="#a9bdd6"/><stop offset="1" stop-color="#6d86a6"/></linearGradient><linearGradient id="g43d" x1="0" y1="0" x2="1" y2="0"><stop offset="0" stop-color="#8aa0ba"/><stop offset="0.4" stop-color="#4a5260"/><stop offset="1" stop-color="#2a3038"/></linearGradient></defs><path d="M2.5 8.5L35 1L38.5 1.8L40 3.5V33L37 35.5L2 36.5L0.3 33V29L2.5 27.5z" fill="#5f6b78"/><path d="M35 1.5L38.5 2.3L39.6 4V32.8L36.5 35L35 33z" fill="url(#g43d)"/><path d="M1 28.5L35.2 26.2V34.6L2 35.8L0.8 33z" fill="url(#g43)"/><path d="M3 31.5h4M29 30.5h4" stroke="#556070" stroke-width="1.2"/><path d="M3.3 9.3L35 2.2V26.2L3.3 28.3z" fill="#fdfdfd"/><rect x="15.5" y="36" width="11" height="2.2" fill="#40464e"/><path d="M5.5 40.6L8.5 38H28L31 40.6z" fill="#343a42"/><path d="M5 13L30 8" stroke="#e0e020" stroke-width="1.6"/><path d="M5 16L30 11" stroke="#20e0e0" stroke-width="1.6"/><path d="M5 19L30 14" stroke="#20c020" stroke-width="1.6"/><path d="M5 22L30 18" stroke="#ff40ff" stroke-width="1.6"/><path d="M5 25L30 21" stroke="#ff2020" stroke-width="1.6"/><path d="M5 28L30 24" stroke="#2020ff" stroke-width="1.6"/></svg>
<svg style="position:absolute;left:1235.00px;top:65.70px;" width="41" height="41" viewBox="0 0 41 41"><defs><linearGradient id="g44" x1="0" y1="0" x2="1" y2="0.3"><stop offset="0" stop-color="#e4ebf3"/><stop offset="0.5" stop-color="#a9bdd6"/><stop offset="1" stop-color="#6d86a6"/></linearGradient><linearGradient id="g44d" x1="0" y1="0" x2="1" y2="0"><stop offset="0" stop-color="#8aa0ba"/><stop offset="0.4" stop-color="#4a5260"/><stop offset="1" stop-color="#2a3038"/></linearGradient></defs><path d="M2.5 8.5L35 1L38.5 1.8L40 3.5V33L37 35.5L2 36.5L0.3 33V29L2.5 27.5z" fill="#5f6b78"/><path d="M35 1.5L38.5 2.3L39.6 4V32.8L36.5 35L35 33z" fill="url(#g44d)"/><path d="M1 28.5L35.2 26.2V34.6L2 35.8L0.8 33z" fill="url(#g44)"/><path d="M3 31.5h4M29 30.5h4" stroke="#556070" stroke-width="1.2"/><path d="M3.3 9.3L35 2.2V26.2L3.3 28.3z" fill="#fdfdfd"/><rect x="15.5" y="36" width="11" height="2.2" fill="#40464e"/><path d="M5.5 40.6L8.5 38H28L31 40.6z" fill="#343a42"/><path d="M5 15L12 13L18 13L24 11L30 12" stroke="#ff0000" stroke-width="2.4" fill="none"/><path d="M5 16L12 14L18 14L24 12L30 13" stroke="#2020ff" stroke-width="1.2" fill="none"/><path d="M5 17L12 15L18 15" stroke="#20c020" stroke-width="1.2" fill="none"/><path d="M5 26L10 24L14 20L18 24L24 21L30 25" stroke="#ff20ff" stroke-width="2" fill="none"/></svg>
<svg style="position:absolute;left:1290.50px;top:65.70px;" width="41" height="41" viewBox="0 0 41 41"><defs><linearGradient id="g45" x1="0" y1="0" x2="1" y2="0.3"><stop offset="0" stop-color="#e4ebf3"/><stop offset="0.5" stop-color="#a9bdd6"/><stop offset="1" stop-color="#6d86a6"/></linearGradient><linearGradient id="g45d" x1="0" y1="0" x2="1" y2="0"><stop offset="0" stop-color="#8aa0ba"/><stop offset="0.4" stop-color="#4a5260"/><stop offset="1" stop-color="#2a3038"/></linearGradient></defs><path d="M2.5 8.5L35 1L38.5 1.8L40 3.5V33L37 35.5L2 36.5L0.3 33V29L2.5 27.5z" fill="#5f6b78"/><path d="M35 1.5L38.5 2.3L39.6 4V32.8L36.5 35L35 33z" fill="url(#g45d)"/><path d="M1 28.5L35.2 26.2V34.6L2 35.8L0.8 33z" fill="url(#g45)"/><path d="M3 31.5h4M29 30.5h4" stroke="#556070" stroke-width="1.2"/><path d="M3.3 9.3L35 2.2V26.2L3.3 28.3z" fill="#2a2a2a"/><rect x="15.5" y="36" width="11" height="2.2" fill="#40464e"/><path d="M5.5 40.6L8.5 38H28L31 40.6z" fill="#343a42"/><path d="M5 15L30 9" stroke="#d0d000" stroke-width="1.6"/><path d="M5 19L10 17L15 19L20 16L25 18L30 15" stroke="#e06020" stroke-width="1.4" fill="none"/><path d="M5 20L12 18L18 20L24 17L30 16" stroke="#20a020" stroke-width="1.4" fill="none"/><path d="M5 24L30 21" stroke="#ff20ff" stroke-width="1.6"/><path d="M5 27L30 24" stroke="#8060e0" stroke-width="1.6"/></svg>
<div style="left:6.00px;top:202.50px;width:2415.50px;height:269.50px;background:#8c8c8c;"></div>
<div style="left:8px;top:204px;width:2411.5px;height:17px;background:linear-gradient(90deg,#e2e9f3,#ebf1f9);border-radius:6px 6px 0 0"></div>
<div style="left:17.50px;top:207.75px;font:bold 13.00px/13.00px 'Liberation Sans',sans-serif;color:#4b4b4b;white-space:pre;transform:scaleX(1.0575);transform-origin:0 0;">( Average dE: 1.21 [0.58,0.50,0.82] max: 3.13 [CIE2000] )</div>
<div style="left:8.00px;top:220.50px;width:2411.50px;height:249.50px;background:#ececec;"></div>
<div style="left:8.00px;top:224.00px;width:2.00px;height:248.00px;background:#22d322;"></div>
<div style="left:8.00px;top:469.50px;width:2412.00px;height:2.00px;background:#22d322;"></div>
<div style="left:2418.00px;top:224.00px;width:2.00px;height:248.00px;background:#22d322;"></div>
<div style="left:2397.00px;top:224.00px;width:23.00px;height:2.00px;background:#22d322;"></div>
<div style="left:8px;top:204px;width:10px;height:22px;border-top:2px solid #22d322;border-left:2px solid #22d322;border-radius:8px 0 0 0"></div>
<div style="left:2408px;top:204px;width:12px;height:22px;border-top:2px solid #22d322;border-right:2px solid #22d322;border-radius:0 8px 0 0"></div>
<div style="left:10.50px;top:220.50px;width:2385.50px;height:2.00px;background:#888888;"></div>
<div style="left:10.50px;top:220.50px;width:2.00px;height:220.50px;background:#888888;"></div>
<div style="left:12.50px;top:222.50px;width:2361.00px;height:218.50px;background:#f0f0f0;"></div>
<div style="left:12.50px;top:222.50px;width:66.50px;height:28.50px;background:#f0f0f0;"></div>
<div style="left:80.00px;top:222.50px;width:458.50px;height:28.50px;background:#f0f0f0;"></div>
<div style="left:305.15px;top:229.96px;font:bold 16.00px/16.00px 'Liberation Sans',sans-serif;color:#111;white-space:pre;transform:scaleX(0.9200);transform-origin:0 0;">0</div>
<div style="left:538.50px;top:222.50px;width:458.50px;height:28.50px;background:#bebeef;"></div>
<div style="left:759.56px;top:229.96px;font:bold 16.00px/16.00px 'Liberation Sans',sans-serif;color:#111;white-space:pre;transform:scaleX(0.9200);transform-origin:0 0;">25</div>
<div style="left:997.00px;top:222.50px;width:458.50px;height:28.50px;background:#8b8bef;"></div>
<div style="left:1218.06px;top:229.96px;font:bold 16.00px/16.00px 'Liberation Sans',sans-serif;color:#111;white-space:pre;transform:scaleX(0.9200);transform-origin:0 0;">50</div>
<div style="left:1455.50px;top:222.50px;width:458.50px;height:28.50px;background:#5f5fef;"></div>
<div style="left:1676.56px;top:229.96px;font:bold 16.00px/16.00px 'Liberation Sans',sans-serif;color:#111;white-space:pre;transform:scaleX(0.9200);transform-origin:0 0;">75</div>
<div style="left:1914.00px;top:222.50px;width:459.00px;height:28.50px;background:#3131ec;"></div>
<div style="left:2131.21px;top:229.96px;font:bold 16.00px/16.00px 'Liberation Sans',sans-serif;color:#111;white-space:pre;transform:scaleX(0.9200);transform-origin:0 0;">100</div>
<div style="left:26.82px;top:229.96px;font:bold 16.00px/16.00px 'Liberation Sans',sans-serif;color:#111;white-space:pre;transform:scaleX(0.8800);transform-origin:0 0;">% Sat</div>
<div style="left:12.50px;top:251.00px;width:66.50px;height:31.00px;background:#f0f0f0;"></div>
<div style="left:80.00px;top:251.00px;width:458.50px;height:31.00px;background:#ffffff;"></div>
<div style="left:493.87px;top:259.96px;font:normal 16.00px/16.00px 'Liberation Sans',sans-serif;color:#111;white-space:pre;transform:scaleX(0.8600);transform-origin:0 0;">0.3124</div>
<div style="left:538.50px;top:251.00px;width:458.50px;height:31.00px;background:#ffffff;"></div>
<div style="left:952.37px;top:259.96px;font:normal 16.00px/16.00px 'Liberation Sans',sans-serif;color:#111;white-space:pre;transform:scaleX(0.8600);transform-origin:0 0;">0.2675</div>
<div style="left:997.00px;top:251.00px;width:458.50px;height:31.00px;background:#ffffff;"></div>
<div style="left:1410.87px;top:259.96px;font:normal 16.00px/16.00px 'Liberation Sans',sans-serif;color:#111;white-space:pre;transform:scaleX(0.8600);transform-origin:0 0;">0.2272</div>
<div style="left:1455.50px;top:251.00px;width:458.50px;height:31.00px;background:#ffffff;"></div>
<div style="left:1869.37px;top:259.96px;font:normal 16.00px/16.00px 'Liberation Sans',sans-serif;color:#111;white-space:pre;transform:scaleX(0.8600);transform-origin:0 0;">0.1857</div>
<div style="left:1914.00px;top:251.00px;width:459.00px;height:31.00px;background:#ffffff;"></div>
<div style="left:2328.37px;top:259.96px;font:normal 16.00px/16.00px 'Liberation Sans',sans-serif;color:#111;white-space:pre;transform:scaleX(0.8600);transform-origin:0 0;">0.1554</div>
<div style="left:41.99px;top:260.38px;font:bold 15.50px/15.50px 'Liberation Sans',sans-serif;color:#111;white-space:pre;transform:scaleX(0.9300);transform-origin:0 0;">x</div>
<div style="left:12.50px;top:281.00px;width:66.50px;height:2.00px;background:#7f7f7f;"></div>
<div style="left:80.00px;top:281.00px;width:2293.00px;height:1.50px;background:#cfcfcf;"></div>
<div style="left:12.50px;top:282.00px;width:66.50px;height:31.00px;background:#f0f0f0;"></div>
<div style="left:80.00px;top:282.00px;width:458.50px;height:31.00px;background:#ffffff;"></div>
<div style="left:493.87px;top:290.96px;font:normal 16.00px/16.00px 'Liberation Sans',sans-serif;color:#111;white-space:pre;transform:scaleX(0.8600);transform-origin:0 0;">0.3305</div>
<div style="left:538.50px;top:282.00px;width:458.50px;height:31.00px;background:#ffffff;"></div>
<div style="left:952.37px;top:290.96px;font:normal 16.00px/16.00px 'Liberation Sans',sans-serif;color:#111;white-space:pre;transform:scaleX(0.8600);transform-origin:0 0;">0.2524</div>
<div style="left:997.00px;top:282.00px;width:458.50px;height:31.00px;background:#ffffff;"></div>
<div style="left:1410.87px;top:290.96px;font:normal 16.00px/16.00px 'Liberation Sans',sans-serif;color:#111;white-space:pre;transform:scaleX(0.8600);transform-origin:0 0;">0.1849</div>
<div style="left:1455.50px;top:282.00px;width:458.50px;height:31.00px;background:#ffffff;"></div>
<div style="left:1870.39px;top:290.96px;font:normal 16.00px/16.00px 'Liberation Sans',sans-serif;color:#111;white-space:pre;transform:scaleX(0.8600);transform-origin:0 0;">0.1156</div>
<div style="left:1914.00px;top:282.00px;width:459.00px;height:31.00px;background:#ffffff;"></div>
<div style="left:2328.37px;top:290.96px;font:normal 16.00px/16.00px 'Liberation Sans',sans-serif;color:#111;white-space:pre;transform:scaleX(0.8600);transform-origin:0 0;">0.0546</div>
<div style="left:41.99px;top:291.38px;font:bold 15.50px/15.50px 'Liberation Sans',sans-serif;color:#111;white-space:pre;transform:scaleX(0.9300);transform-origin:0 0;">y</div>
<div style="left:12.50px;top:312.00px;width:66.50px;height:2.00px;background:#7f7f7f;"></div>
<div style="left:80.00px;top:312.00px;width:2293.00px;height:1.50px;background:#cfcfcf;"></div>
<div style="left:12.50px;top:313.00px;width:66.50px;height:31.00px;background:#f0f0f0;"></div>
<div style="left:80.00px;top:313.00px;width:458.50px;height:31.00px;background:#ffffff;"></div>
<div style="left:501.53px;top:321.96px;font:normal 16.00px/16.00px 'Liberation Sans',sans-serif;color:#111;white-space:pre;transform:scaleX(0.8600);transform-origin:0 0;">7.136</div>
<div style="left:538.50px;top:313.00px;width:458.50px;height:31.00px;background:#ffffff;"></div>
<div style="left:960.03px;top:321.96px;font:normal 16.00px/16.00px 'Liberation Sans',sans-serif;color:#111;white-space:pre;transform:scaleX(0.8600);transform-origin:0 0;">7.125</div>
<div style="left:997.00px;top:313.00px;width:458.50px;height:31.00px;background:#ffffff;"></div>
<div style="left:1418.53px;top:321.96px;font:normal 16.00px/16.00px 'Liberation Sans',sans-serif;color:#111;white-space:pre;transform:scaleX(0.8600);transform-origin:0 0;">6.744</div>
<div style="left:1455.50px;top:313.00px;width:458.50px;height:31.00px;background:#ffffff;"></div>
<div style="left:1877.03px;top:321.96px;font:normal 16.00px/16.00px 'Liberation Sans',sans-serif;color:#111;white-space:pre;transform:scaleX(0.8600);transform-origin:0 0;">7.090</div>
<div style="left:1914.00px;top:313.00px;width:459.00px;height:31.00px;background:#ffffff;"></div>
<div style="left:2336.03px;top:321.96px;font:normal 16.00px/16.00px 'Liberation Sans',sans-serif;color:#111;white-space:pre;transform:scaleX(0.8600);transform-origin:0 0;">7.729</div>
<div style="left:41.19px;top:322.38px;font:bold 15.50px/15.50px 'Liberation Sans',sans-serif;color:#111;white-space:pre;transform:scaleX(0.9300);transform-origin:0 0;">Y</div>
<div style="left:12.50px;top:343.00px;width:66.50px;height:2.00px;background:#7f7f7f;"></div>
<div style="left:80.00px;top:343.00px;width:2293.00px;height:1.50px;background:#cfcfcf;"></div>
<div style="left:12.50px;top:344.00px;width:66.50px;height:31.50px;background:#f0f0f0;"></div>
<div style="left:80.00px;top:344.00px;width:458.50px;height:31.50px;background:#aefca8;"></div>
<div style="left:515.52px;top:353.21px;font:bold 16.00px/16.00px 'Liberation Sans',sans-serif;color:#111;white-space:pre;transform:scaleX(0.9200);transform-origin:0 0;">0.6</div>
<div style="left:538.50px;top:344.00px;width:458.50px;height:31.50px;background:#aefca8;"></div>
<div style="left:974.02px;top:353.21px;font:bold 16.00px/16.00px 'Liberation Sans',sans-serif;color:#111;white-space:pre;transform:scaleX(0.9200);transform-origin:0 0;">0.6</div>
<div style="left:997.00px;top:344.00px;width:458.50px;height:31.50px;background:#aefca8;"></div>
<div style="left:1432.52px;top:353.21px;font:bold 16.00px/16.00px 'Liberation Sans',sans-serif;color:#111;white-space:pre;transform:scaleX(0.9200);transform-origin:0 0;">0.9</div>
<div style="left:1455.50px;top:344.00px;width:458.50px;height:31.50px;background:#aefca8;"></div>
<div style="left:1891.02px;top:353.21px;font:bold 16.00px/16.00px 'Liberation Sans',sans-serif;color:#111;white-space:pre;transform:scaleX(0.9200);transform-origin:0 0;">0.8</div>
<div style="left:1914.00px;top:344.00px;width:459.00px;height:31.50px;background:#ffaaaa;"></div>
<div style="left:2350.02px;top:353.21px;font:bold 16.00px/16.00px 'Liberation Sans',sans-serif;color:#111;white-space:pre;transform:scaleX(0.9200);transform-origin:0 0;">3.1</div>
<div style="left:21.56px;top:353.63px;font:bold 15.50px/15.50px 'Liberation Sans',sans-serif;color:#111;white-space:pre;transform:scaleX(0.9300);transform-origin:0 0;">Delta E</div>
<div style="left:12.50px;top:374.50px;width:66.50px;height:2.00px;background:#7f7f7f;"></div>
<div style="left:80.00px;top:374.50px;width:2293.00px;height:1.50px;background:#cfcfcf;"></div>
<div style="left:12.50px;top:375.50px;width:66.50px;height:31.50px;background:#f0f0f0;"></div>
<div style="left:80.00px;top:375.50px;width:458.50px;height:31.50px;background:#f0f0f0;"></div>
<div style="left:493.87px;top:384.71px;font:normal 16.00px/16.00px 'Liberation Sans',sans-serif;color:#111;white-space:pre;transform:scaleX(0.8600);transform-origin:0 0;">0.0016</div>
<div style="left:538.50px;top:375.50px;width:458.50px;height:31.50px;background:#f0f0f0;"></div>
<div style="left:952.37px;top:384.71px;font:normal 16.00px/16.00px 'Liberation Sans',sans-serif;color:#111;white-space:pre;transform:scaleX(0.8600);transform-origin:0 0;">0.0027</div>
<div style="left:997.00px;top:375.50px;width:458.50px;height:31.50px;background:#f0f0f0;"></div>
<div style="left:1410.87px;top:384.71px;font:normal 16.00px/16.00px 'Liberation Sans',sans-serif;color:#111;white-space:pre;transform:scaleX(0.8600);transform-origin:0 0;">0.0025</div>
<div style="left:1455.50px;top:375.50px;width:458.50px;height:31.50px;background:#f0f0f0;"></div>
<div style="left:1869.37px;top:384.71px;font:normal 16.00px/16.00px 'Liberation Sans',sans-serif;color:#111;white-space:pre;transform:scaleX(0.8600);transform-origin:0 0;">0.0023</div>
<div style="left:1914.00px;top:375.50px;width:459.00px;height:31.50px;background:#f0f0f0;"></div>
<div style="left:2328.37px;top:384.71px;font:normal 16.00px/16.00px 'Liberation Sans',sans-serif;color:#111;white-space:pre;transform:scaleX(0.8600);transform-origin:0 0;">0.0076</div>
<div style="left:19.15px;top:385.13px;font:bold 15.50px/15.50px 'Liberation Sans',sans-serif;color:#111;white-space:pre;transform:scaleX(0.9300);transform-origin:0 0;">delta xy</div>
<div style="left:12.50px;top:406.00px;width:66.50px;height:2.00px;background:#7f7f7f;"></div>
<div style="left:80.00px;top:406.00px;width:2293.00px;height:1.50px;background:#cfcfcf;"></div>
<div style="left:12.50px;top:407.00px;width:66.50px;height:31.00px;background:#f0f0f0;"></div>
<div style="left:80.00px;top:407.00px;width:458.50px;height:31.00px;background:#e0e0e0;"></div>
<div style="left:492.74px;top:415.96px;font:normal 16.00px/16.00px 'Liberation Sans',sans-serif;color:#111;white-space:pre;transform:scaleX(0.8600);transform-origin:0 0;">+0.3 %</div>
<div style="left:538.50px;top:407.00px;width:458.50px;height:31.00px;background:#e0e0e0;"></div>
<div style="left:951.24px;top:415.96px;font:normal 16.00px/16.00px 'Liberation Sans',sans-serif;color:#111;white-space:pre;transform:scaleX(0.8600);transform-origin:0 0;">+0.8 %</div>
<div style="left:997.00px;top:407.00px;width:458.50px;height:31.00px;background:#e0e0e0;"></div>
<div style="left:1413.20px;top:415.96px;font:normal 16.00px/16.00px 'Liberation Sans',sans-serif;color:#111;white-space:pre;transform:scaleX(0.8600);transform-origin:0 0;">-5.9 %</div>
<div style="left:1455.50px;top:407.00px;width:458.50px;height:31.00px;background:#e0e0e0;"></div>
<div style="left:1871.70px;top:415.96px;font:normal 16.00px/16.00px 'Liberation Sans',sans-serif;color:#111;white-space:pre;transform:scaleX(0.8600);transform-origin:0 0;">-4.0 %</div>
<div style="left:1914.00px;top:407.00px;width:459.00px;height:31.00px;background:#e0e0e0;"></div>
<div style="left:2323.04px;top:415.96px;font:normal 16.00px/16.00px 'Liberation Sans',sans-serif;color:#111;white-space:pre;transform:scaleX(0.8600);transform-origin:0 0;">-12.3 %</div>
<div style="left:22.76px;top:416.38px;font:bold 15.50px/15.50px 'Liberation Sans',sans-serif;color:#111;white-space:pre;transform:scaleX(0.9300);transform-origin:0 0;">delta L</div>
<div style="left:12.50px;top:437.00px;width:66.50px;height:2.00px;background:#7f7f7f;"></div>
<div style="left:80.00px;top:437.00px;width:2293.00px;height:1.50px;background:#cfcfcf;"></div>
<div style="left:12.50px;top:250.00px;width:2360.50px;height:2.00px;background:#7f7f7f;"></div>
<div style="left:79.00px;top:222.50px;width:2.00px;height:218.50px;background:#7f7f7f;"></div>
<div style="left:537.50px;top:222.50px;width:1.50px;height:218.50px;background:#cfcfcf;"></div>
<div style="left:996.00px;top:222.50px;width:1.50px;height:218.50px;background:#cfcfcf;"></div>
<div style="left:1454.50px;top:222.50px;width:1.50px;height:218.50px;background:#cfcfcf;"></div>
<div style="left:1913.00px;top:222.50px;width:1.50px;height:218.50px;background:#cfcfcf;"></div>
<div style="left:2373.50px;top:222.50px;width:22.50px;height:218.50px;background:#f0f0f0;"></div>
<div style="left:2384.00px;top:245.00px;width:2.00px;height:175.00px;background:#888;"></div>
<div style="left:12.50px;top:441.00px;width:2383.50px;height:28.00px;background:#f0f0f0;"></div>
<svg style="position:absolute;left:16.00px;top:448.00px;" width="14" height="16" viewBox="0 0 14 16"><path d="M10 2L3 8L10 14z" fill="#a0a0a0"/></svg>
<svg style="position:absolute;left:2357.00px;top:448.00px;" width="14" height="16" viewBox="0 0 14 16"><path d="M4 2L11 8L4 14z" fill="#a0a0a0"/></svg>
<div style="left:2421.50px;top:198.40px;width:3.00px;height:278.10px;background:#8a8a8a;"></div>
<div style="left:2424.50px;top:198.40px;width:105.50px;height:127.80px;background:#fdfdfd;"></div>
<div style="left:2530.00px;top:194.40px;width:6.00px;height:282.10px;background:#8a8a8a;"></div>
<div style="left:2428.50px;top:203.30px;width:100.00px;height:122.90px;background:#8c8c8c;"></div>
<div style="left:2430.5px;top:204.8px;width:96.0px;height:20.0px;background:linear-gradient(90deg,#e2e9f3,#ebf1f9);border-radius:6px 6px 0 0"></div>
<div style="left:2430.50px;top:224.80px;width:96.00px;height:1.50px;background:#a9aeb5;"></div>
<div style="left:2430.50px;top:226.30px;width:96.00px;height:97.90px;background:#ececec;"></div>
<div style="left:2437.80px;top:207.73px;font:bold 14.50px/14.50px 'Liberation Sans',sans-serif;color:#4b4b4b;white-space:pre;transform:scaleX(1.1555);transform-origin:0 0;">Display</div>
<div style="left:2437.00px;top:226.50px;width:83.00px;height:17.00px;background:#efefef;"></div>
<svg style="position:absolute;left:2438.50px;top:228.50px;" width="14" height="14" viewBox="0 0 14 14"><circle cx="7" cy="7" r="6" fill="#f4f4f4" stroke="none"/><path d="M2.2 10.5A6 6 0 0 1 10.5 2.2" fill="none" stroke="#7b7b7b" stroke-width="1.6"/></svg>
<div style="left:2461.50px;top:227.96px;font:normal 16.00px/16.00px 'Liberation Sans',sans-serif;color:#aaaaaa;white-space:pre;">Sensor</div>
<div style="left:2437.00px;top:246.50px;width:83.00px;height:17.00px;background:#efefef;"></div>
<svg style="position:absolute;left:2438.50px;top:248.50px;" width="14" height="14" viewBox="0 0 14 14"><circle cx="7" cy="7" r="6" fill="#ffffff" stroke="none"/><path d="M2.2 10.5A6 6 0 0 1 10.5 2.2" fill="none" stroke="#7b7b7b" stroke-width="1.6"/></svg>
<div style="left:2461.50px;top:247.96px;font:normal 16.00px/16.00px 'Liberation Sans',sans-serif;color:#111;white-space:pre;">RGB</div>
<div style="left:2437.00px;top:266.50px;width:83.00px;height:17.00px;background:#efefef;"></div>
<svg style="position:absolute;left:2438.50px;top:268.50px;" width="14" height="14" viewBox="0 0 14 14"><circle cx="7" cy="7" r="6" fill="#ffffff" stroke="none"/><path d="M2.2 10.5A6 6 0 0 1 10.5 2.2" fill="none" stroke="#7b7b7b" stroke-width="1.6"/></svg>
<div style="left:2461.50px;top:267.96px;font:normal 16.00px/16.00px 'Liberation Sans',sans-serif;color:#111;white-space:pre;">XYZ</div>
<div style="left:2437.00px;top:286.00px;width:83.00px;height:17.00px;background:#efefef;"></div>
<svg style="position:absolute;left:2438.50px;top:288.00px;" width="14" height="14" viewBox="0 0 14 14"><circle cx="7" cy="7" r="6" fill="#ffffff" stroke="none"/><path d="M2.2 10.5A6 6 0 0 1 10.5 2.2" fill="none" stroke="#7b7b7b" stroke-width="1.6"/></svg>
<div style="left:2461.50px;top:287.46px;font:normal 16.00px/16.00px 'Liberation Sans',sans-serif;color:#111;white-space:pre;">xyz</div>
<div style="left:2437.00px;top:305.50px;width:83.00px;height:17.00px;background:#efefef;"></div>
<svg style="position:absolute;left:2438.50px;top:307.50px;" width="14" height="14" viewBox="0 0 14 14"><circle cx="7" cy="7" r="6" fill="#ffffff" stroke="none"/><path d="M2.2 10.5A6 6 0 0 1 10.5 2.2" fill="none" stroke="#7b7b7b" stroke-width="1.6"/><circle cx="7" cy="7" r="2.6" fill="#000"/></svg>
<div style="left:2461.50px;top:306.96px;font:normal 16.00px/16.00px 'Liberation Sans',sans-serif;color:#111;white-space:pre;">xyY</div>
<div style="left:2421.50px;top:326.20px;width:114.50px;height:150.30px;background:#8a8a8a;"></div>
<div style="left:2425.50px;top:330.50px;width:102.50px;height:36.50px;background:#ececec;box-shadow:inset 1px 1px 0 #fafafa,inset -1px -1px 0 #c8c8c8"></div>
<div style="left:2489.00px;top:341.96px;font:normal 16.00px/16.00px 'Liberation Sans',sans-serif;color:#111;white-space:pre;">Go</div>
<div style="left:2425.50px;top:367.50px;width:102.50px;height:36.50px;background:#ececec;box-shadow:inset 1px 1px 0 #fafafa,inset -1px -1px 0 #c8c8c8"></div>
<div style="left:2474.00px;top:378.96px;font:normal 16.00px/16.00px 'Liberation Sans',sans-serif;color:#111;white-space:pre;">Delete</div>
<div style="left:2425.50px;top:404.50px;width:102.50px;height:36.50px;background:#ececec;box-shadow:inset 1px 1px 0 #fafafa,inset -1px -1px 0 #c8c8c8"></div>
<div style="left:2482.50px;top:415.96px;font:normal 16.00px/16.00px 'Liberation Sans',sans-serif;color:#111;white-space:pre;">Refs</div>
<svg style="position:absolute;left:2432.00px;top:333.50px;" width="42" height="34" viewBox="0 0 42 34"><rect x="0" y="1" width="9" height="32" fill="#b8b8b8"/><rect x="33" y="1" width="9" height="32" fill="#b8b8b8"/><path d="M0 1V33M41 5V33" stroke="#222" stroke-width="1.5"/><rect x="1" y="3" width="3" height="2" fill="#111"/><rect x="37" y="3" width="3" height="2" fill="#111"/><rect x="1" y="7" width="3" height="2" fill="#111"/><rect x="37" y="7" width="3" height="2" fill="#111"/><rect x="1" y="11" width="3" height="2" fill="#111"/><rect x="37" y="11" width="3" height="2" fill="#111"/><rect x="1" y="15" width="3" height="2" fill="#111"/><rect x="37" y="15" width="3" height="2" fill="#111"/><rect x="1" y="19" width="3" height="2" fill="#111"/><rect x="37" y="19" width="3" height="2" fill="#111"/><rect x="1" y="23" width="3" height="2" fill="#111"/><rect x="37" y="23" width="3" height="2" fill="#111"/><rect x="1" y="27" width="3" height="2" fill="#111"/><rect x="37" y="27" width="3" height="2" fill="#111"/><rect x="1" y="31" width="3" height="2" fill="#111"/><rect x="37" y="31" width="3" height="2" fill="#111"/><path d="M6 7Q14 3 22 1L27 0Q25 10 30 20Q33 28 36 32L25 34Q18 28 15 20Q12 12 6 7z" fill="#1a3fd0" stroke="#0a1050" stroke-width="1.6"/><path d="M11 8L21 4L23 12L14 15z" fill="#5aa0ff"/><path d="M17 20L25 17L29 27L21 30z" fill="#4a90ff"/><path d="M5 8L10 10M4 20L12 20M6 28L14 26" stroke="#909090" stroke-width="2"/></svg>
<svg style="position:absolute;left:2433.00px;top:370.00px;" width="40" height="34" viewBox="0 0 40 34"><defs><linearGradient id="dg" x1="0" y1="0" x2="1" y2="0"><stop offset="0" stop-color="#e8f8ff"/><stop offset="0.6" stop-color="#9fd0f4"/><stop offset="1" stop-color="#4a90d8"/></linearGradient></defs><path d="M1 5Q18 -1 36 1L31 30Q18 36 6 31z" fill="url(#dg)" stroke="#70a8d8" stroke-width="0.8"/><ellipse cx="18" cy="29" rx="12" ry="4" fill="#c8e8ff" opacity="0.7"/><path d="M17 14a6.5 6.5 0 0 1 10-3l2-2v7h-7l2.5-2.5a3.5 3.5 0 0 0-5 1.5zM27 20a6.5 6.5 0 0 1-10 3l-2 2v-7h7l-2.5 2.5a3.5 3.5 0 0 0 5-1.5z" fill="#0aa020"/></svg>
<svg style="position:absolute;left:2432.00px;top:408.50px;" width="40" height="32" viewBox="0 0 40 32"><path d="M1 14L4 12L5 16L8 10L10 4L12 9L14 12L15 10L17 14L20 11L22 8L24 2L26 4L28 6L31 10L33 14L35 12L37 14L39 16V32H1z" fill="#ffee00"/><rect x="1" y="16" width="4" height="16" fill="#2020a0"/><rect x="4" y="16" width="3" height="16" fill="#e020e0"/><rect x="7" y="10" width="5" height="22" fill="#1010ff"/><rect x="12" y="14" width="5" height="18" fill="#00ffff"/><rect x="17" y="15" width="5" height="17" fill="#00ff00"/><rect x="22" y="4" width="7" height="28" fill="#ffff00"/><rect x="29" y="8" width="5" height="24" fill="#800000"/><rect x="34" y="14" width="6" height="18" fill="#ff0000"/></svg>
<div style="left:2432.50px;top:447.50px;width:70.00px;height:22.50px;background:#efefef;"></div>
<div style="left:2434.00px;top:451.00px;width:14.00px;height:14.00px;background:#ffffff;box-shadow:inset 2px 2px 0 #7b7b7b,inset -1px -1px 0 #e6e6e6"></div>
<div style="left:2456.00px;top:452.46px;font:normal 16.00px/16.00px 'Liberation Sans',sans-serif;color:#111;white-space:pre;">Edit</div>
<div style="left:0.00px;top:472.00px;width:2421.50px;height:3.50px;background:#fdfdfd;"></div>
<div style="left:0.00px;top:475.50px;width:2536.00px;height:4.20px;background:#7a7a7a;"></div>
<div style="left:0.00px;top:479.70px;width:2536.00px;height:4.30px;background:#fdfdfd;"></div>
<div style="left:0.00px;top:113.00px;width:2.00px;height:1264.00px;background:#8a8a8a;"></div>
<div style="left:2.00px;top:117.00px;width:4.00px;height:1232.00px;background:#fdfdfd;"></div>
<div style="left:2.00px;top:194.40px;width:4.00px;height:4.00px;background:#7a7a7a;"></div>
<div style="left:2.00px;top:475.50px;width:4.00px;height:4.20px;background:#7a7a7a;"></div>
<div style="left:2536.00px;top:117.00px;width:10.00px;height:1260.00px;background:#f3f3f3;"></div>
<div style="left:2536.00px;top:117.00px;width:4.00px;height:1240.00px;background:#fdfdfd;"></div>
<div style="left:2546.00px;top:137.00px;width:3.00px;height:1160.50px;background:#999999;"></div>
<div style="left:2558.00px;top:117.00px;width:1.50px;height:1260.00px;background:#fafafa;"></div>
<div style="left:479.00px;top:484.00px;width:2.50px;height:871.00px;background:#fdfdfd;"></div>
<div style="left:481.50px;top:479.70px;width:3.00px;height:875.30px;background:#7a7a7a;"></div>
<div style="left:484.50px;top:484.00px;width:4.50px;height:871.00px;background:#fdfdfd;"></div>
<div style="left:0.00px;top:1346.70px;width:2530.40px;height:2.05px;background:#f4f4f4;"></div>
<div style="left:0.00px;top:1348.75px;width:2532.70px;height:2.25px;background:#777777;"></div>
<div style="left:0.00px;top:1351.00px;width:2536.00px;height:3.60px;background:#bbbbbb;"></div>
<div style="left:2528.00px;top:484.00px;width:2.40px;height:864.75px;background:#f4f4f4;"></div>
<div style="left:2530.40px;top:479.70px;width:2.30px;height:871.30px;background:#777777;"></div>
<div style="left:2532.70px;top:479.70px;width:3.30px;height:874.90px;background:#bbbbbb;"></div>
<div style="left:0.00px;top:1355.00px;width:2560.00px;height:23.00px;background:#f0f0f0;"></div>
<div style="left:0.00px;top:1355.00px;width:2.00px;height:22.00px;background:#8a8a8a;"></div>
<div style="left:24.00px;top:1365.00px;width:2437.00px;height:2.20px;background:#8a8a8a;"></div>
<div style="left:6.50px;top:484.20px;width:472.50px;height:862.50px;background:#8c8c8c;"></div>
<div style="left:8.5px;top:485.7px;width:468.5px;height:20.5px;background:linear-gradient(90deg,#e2e9f3,#ebf1f9);border-radius:6px 6px 0 0"></div>
<div style="left:8.50px;top:506.20px;width:468.50px;height:1.50px;background:#a9aeb5;"></div>
<div style="left:8.50px;top:507.70px;width:468.50px;height:837.00px;background:#ececec;"></div>
<div style="left:15.00px;top:489.23px;font:bold 14.50px/14.50px 'Liberation Sans',sans-serif;color:#4b4b4b;white-space:pre;transform:scaleX(1.1723);transform-origin:0 0;">Selected color</div>
<div style="left:15.00px;top:489.65px;font:bold 14.00px/14.00px 'Liberation Sans',sans-serif;color:#000;white-space:pre;"></div>
<div style="left:20.50px;top:511.00px;width:139.50px;height:17.50px;background:#f1f1f1;"></div>
<div style="left:22.80px;top:512.46px;font:normal 16.00px/16.00px 'Liberation Sans',sans-serif;color:#111;white-space:pre;transform:scaleX(0.9939);transform-origin:0 0;">RGB Levels</div>
<div style="left:287.50px;top:509.00px;width:159.50px;height:17.50px;background:#f1f1f1;"></div>
<div style="left:301.00px;top:511.26px;font:normal 16.00px/16.00px 'Liberation Sans',sans-serif;color:#111;white-space:pre;transform:scaleX(1.0989);transform-origin:0 0;">Current Measure</div>
<div style="left:17.00px;top:541.00px;width:250.00px;height:111.00px;background:#efefef;"></div>
<div style="left:17px;top:596px;width:250px;height:0;border-top:2px dashed #a8a8a8"></div>
<div style="left:27.50px;top:615.17px;font:normal 19.50px/19.50px 'Liberation Serif',serif;color:#111;white-space:pre;transform:scaleX(1.0142);transform-origin:0 0;">0.0%</div>
<div style="left:91.70px;top:615.17px;font:normal 19.50px/19.50px 'Liberation Serif',serif;color:#111;white-space:pre;">0.0%</div>
<div style="left:155.40px;top:615.17px;font:normal 19.50px/19.50px 'Liberation Serif',serif;color:#111;white-space:pre;transform:scaleX(1.0092);transform-origin:0 0;">0.0%</div>
<div style="left:213.00px;top:615.17px;font:normal 19.50px/19.50px 'Liberation Serif',serif;color:#111;white-space:pre;transform:scaleX(1.0608);transform-origin:0 0;">dE 0.0</div>
<svg style="position:absolute;left:17.00px;top:633.00px;" width="251" height="17" viewBox="0 0 251 17"><path d="M1.5 11L7.6 7Q18.9 3.2 31.5 3.2Q44.1 3.2 55.4 7L61.5 11z" fill="#a00000" stroke="#000" stroke-width="1.4"/><path d="M64.5 11L70.7 7Q82.2 3.2 95.0 3.2Q107.8 3.2 119.3 7L125.5 11z" fill="#00a000" stroke="#000" stroke-width="1.4"/><path d="M128.5 11L134.7 7Q146.2 3.2 159.0 3.2Q171.8 3.2 183.3 7L189.5 11z" fill="#0000b0" stroke="#000" stroke-width="1.4"/><path d="M192.5 11L198.2 7Q209.0 3.2 221.0 3.2Q233.0 3.2 243.8 7L249.5 11z" fill="#c08800" stroke="#000" stroke-width="1.4"/><rect x="0" y="10" width="251" height="6" fill="#000"/></svg>
<div style="left:19.50px;top:666.00px;width:240.50px;height:92.50px;background:#f1f1f1;"></div>
<div style="left:44.70px;top:668.61px;font:bold 17.00px/17.00px 'Liberation Sans',sans-serif;color:#111;white-space:pre;transform:scaleX(1.0048);transform-origin:0 0;">Measure</div>
<div style="left:159.00px;top:668.61px;font:bold 17.00px/17.00px 'Liberation Sans',sans-serif;color:#111;white-space:pre;transform:scaleX(0.9927);transform-origin:0 0;">Reference</div>
<div style="left:23.00px;top:778.46px;font:normal 16.00px/16.00px 'Liberation Sans',sans-serif;color:#111;white-space:pre;transform:scaleX(1.1232);transform-origin:0 0;">Target</div>
<div style="left:62px;top:797.5px;width:146px;height:111.5px;border:1px solid #000;background:conic-gradient(from 0deg at 50% 50%,#50f000 0deg,#c8e000 35deg,#ff9000 60deg,#ff0000 95deg,#ff0060 125deg,#e000a0 145deg,#8000c8 180deg,#2000ff 215deg,#0040e0 245deg,#00a0b0 275deg,#00e080 310deg,#30ff40 340deg,#50f000 360deg)"></div>
<svg style="position:absolute;left:84.00px;top:814.00px;" width="102" height="79" viewBox="0 0 102 79"><rect x="0.5" y="0.5" width="101" height="78" rx="11" fill="#000" stroke="#fff" stroke-width="1"/><path d="M51.5 1V78M-2 39H105" stroke="#fff" stroke-width="1" stroke-dasharray="3 2"/><ellipse cx="51.5" cy="39" rx="26" ry="19" fill="none" stroke="#fff" stroke-width="1" stroke-dasharray="3 3"/></svg>
<div style="left:275.00px;top:538.30px;width:191.00px;height:798.70px;background:#f0f0f0;"></div>
<div style="left:275.00px;top:538.30px;width:191.00px;height:1.70px;background:#808080;"></div>
<div style="left:275.50px;top:538.30px;width:2.50px;height:798.70px;background:#808080;"></div>
<div style="left:278.00px;top:540.00px;width:64.60px;height:28.70px;background:#f0f0f0;"></div>
<div style="left:344.00px;top:540.00px;width:98.20px;height:28.70px;background:#ffffff;"></div>
<div style="left:278.00px;top:567.50px;width:64.60px;height:2.00px;background:#7a7a7a;"></div>
<div style="left:344.00px;top:567.50px;width:98.20px;height:1.50px;background:#cfcfcf;"></div>
<div style="left:285.70px;top:547.30px;font:bold 15.00px/15.00px 'Liberation Sans',sans-serif;color:#111;white-space:pre;transform:scaleX(0.9200);transform-origin:0 0;">Y cd/m²</div>
<div style="left:278.00px;top:568.70px;width:64.60px;height:28.70px;background:#f0f0f0;"></div>
<div style="left:344.00px;top:568.70px;width:98.20px;height:28.70px;background:#ffffff;"></div>
<div style="left:278.00px;top:596.20px;width:64.60px;height:2.00px;background:#7a7a7a;"></div>
<div style="left:344.00px;top:596.20px;width:98.20px;height:1.50px;background:#cfcfcf;"></div>
<div style="left:295.29px;top:576.00px;font:bold 15.00px/15.00px 'Liberation Sans',sans-serif;color:#111;white-space:pre;transform:scaleX(0.9200);transform-origin:0 0;">Y ftL</div>
<div style="left:278.00px;top:597.40px;width:64.60px;height:28.70px;background:#f0f0f0;"></div>
<div style="left:344.00px;top:597.40px;width:98.20px;height:28.70px;background:#ffffff;"></div>
<div style="left:278.00px;top:624.90px;width:64.60px;height:2.00px;background:#7a7a7a;"></div>
<div style="left:344.00px;top:624.90px;width:98.20px;height:1.50px;background:#cfcfcf;"></div>
<div style="left:303.53px;top:604.70px;font:bold 15.00px/15.00px 'Liberation Sans',sans-serif;color:#111;white-space:pre;transform:scaleX(0.9200);transform-origin:0 0;">T°</div>
<div style="left:278.00px;top:626.10px;width:64.60px;height:28.70px;background:#f0f0f0;"></div>
<div style="left:344.00px;top:626.10px;width:98.20px;height:28.70px;background:#e0e0e0;"></div>
<div style="left:278.00px;top:653.60px;width:64.60px;height:2.00px;background:#7a7a7a;"></div>
<div style="left:344.00px;top:653.60px;width:98.20px;height:1.50px;background:#cfcfcf;"></div>
<div style="left:305.90px;top:633.40px;font:bold 15.00px/15.00px 'Liberation Sans',sans-serif;color:#111;white-space:pre;transform:scaleX(0.9200);transform-origin:0 0;">X</div>
<div style="left:278.00px;top:654.80px;width:64.60px;height:28.70px;background:#f0f0f0;"></div>
<div style="left:344.00px;top:654.80px;width:98.20px;height:28.70px;background:#e0e0e0;"></div>
<div style="left:278.00px;top:682.30px;width:64.60px;height:2.00px;background:#7a7a7a;"></div>
<div style="left:344.00px;top:682.30px;width:98.20px;height:1.50px;background:#cfcfcf;"></div>
<div style="left:305.90px;top:662.10px;font:bold 15.00px/15.00px 'Liberation Sans',sans-serif;color:#111;white-space:pre;transform:scaleX(0.9200);transform-origin:0 0;">Y</div>
<div style="left:278.00px;top:683.50px;width:64.60px;height:28.70px;background:#f0f0f0;"></div>
<div style="left:344.00px;top:683.50px;width:98.20px;height:28.70px;background:#e0e0e0;"></div>
<div style="left:278.00px;top:711.00px;width:64.60px;height:2.00px;background:#7a7a7a;"></div>
<div style="left:344.00px;top:711.00px;width:98.20px;height:1.50px;background:#cfcfcf;"></div>
<div style="left:306.29px;top:690.80px;font:bold 15.00px/15.00px 'Liberation Sans',sans-serif;color:#111;white-space:pre;transform:scaleX(0.9200);transform-origin:0 0;">Z</div>
<div style="left:278.00px;top:712.20px;width:64.60px;height:28.70px;background:#f0f0f0;"></div>
<div style="left:344.00px;top:712.20px;width:98.20px;height:28.70px;background:#ffffff;"></div>
<div style="left:278.00px;top:739.70px;width:64.60px;height:2.00px;background:#7a7a7a;"></div>
<div style="left:344.00px;top:739.70px;width:98.20px;height:1.50px;background:#cfcfcf;"></div>
<div style="left:305.52px;top:719.50px;font:bold 15.00px/15.00px 'Liberation Sans',sans-serif;color:#111;white-space:pre;transform:scaleX(0.9200);transform-origin:0 0;">R</div>
<div style="left:278.00px;top:740.90px;width:64.60px;height:28.70px;background:#f0f0f0;"></div>
<div style="left:344.00px;top:740.90px;width:98.20px;height:28.70px;background:#ffffff;"></div>
<div style="left:278.00px;top:768.40px;width:64.60px;height:2.00px;background:#7a7a7a;"></div>
<div style="left:344.00px;top:768.40px;width:98.20px;height:1.50px;background:#cfcfcf;"></div>
<div style="left:305.13px;top:748.20px;font:bold 15.00px/15.00px 'Liberation Sans',sans-serif;color:#111;white-space:pre;transform:scaleX(0.9200);transform-origin:0 0;">G</div>
<div style="left:278.00px;top:769.60px;width:64.60px;height:28.70px;background:#f0f0f0;"></div>
<div style="left:344.00px;top:769.60px;width:98.20px;height:28.70px;background:#ffffff;"></div>
<div style="left:278.00px;top:797.10px;width:64.60px;height:2.00px;background:#7a7a7a;"></div>
<div style="left:344.00px;top:797.10px;width:98.20px;height:1.50px;background:#cfcfcf;"></div>
<div style="left:305.52px;top:776.90px;font:bold 15.00px/15.00px 'Liberation Sans',sans-serif;color:#111;white-space:pre;transform:scaleX(0.9200);transform-origin:0 0;">B</div>
<div style="left:278.00px;top:798.30px;width:64.60px;height:28.70px;background:#f0f0f0;"></div>
<div style="left:344.00px;top:798.30px;width:98.20px;height:28.70px;background:#e0e0e0;"></div>
<div style="left:278.00px;top:825.80px;width:64.60px;height:2.00px;background:#7a7a7a;"></div>
<div style="left:344.00px;top:825.80px;width:98.20px;height:1.50px;background:#cfcfcf;"></div>
<div style="left:306.66px;top:805.60px;font:bold 15.00px/15.00px 'Liberation Sans',sans-serif;color:#111;white-space:pre;transform:scaleX(0.9200);transform-origin:0 0;">x</div>
<div style="left:278.00px;top:827.00px;width:64.60px;height:28.70px;background:#f0f0f0;"></div>
<div style="left:344.00px;top:827.00px;width:98.20px;height:28.70px;background:#e0e0e0;"></div>
<div style="left:278.00px;top:854.50px;width:64.60px;height:2.00px;background:#7a7a7a;"></div>
<div style="left:344.00px;top:854.50px;width:98.20px;height:1.50px;background:#cfcfcf;"></div>
<div style="left:306.66px;top:834.30px;font:bold 15.00px/15.00px 'Liberation Sans',sans-serif;color:#111;white-space:pre;transform:scaleX(0.9200);transform-origin:0 0;">y</div>
<div style="left:278.00px;top:855.70px;width:64.60px;height:28.70px;background:#f0f0f0;"></div>
<div style="left:344.00px;top:855.70px;width:98.20px;height:28.70px;background:#e0e0e0;"></div>
<div style="left:278.00px;top:883.20px;width:64.60px;height:2.00px;background:#7a7a7a;"></div>
<div style="left:344.00px;top:883.20px;width:98.20px;height:1.50px;background:#cfcfcf;"></div>
<div style="left:305.90px;top:863.00px;font:bold 15.00px/15.00px 'Liberation Sans',sans-serif;color:#111;white-space:pre;transform:scaleX(0.9200);transform-origin:0 0;">Y</div>
<div style="left:278.00px;top:884.40px;width:64.60px;height:28.70px;background:#f0f0f0;"></div>
<div style="left:344.00px;top:884.40px;width:98.20px;height:28.70px;background:#ffffff;"></div>
<div style="left:278.00px;top:911.90px;width:64.60px;height:2.00px;background:#7a7a7a;"></div>
<div style="left:344.00px;top:911.90px;width:98.20px;height:1.50px;background:#cfcfcf;"></div>
<div style="left:306.66px;top:891.70px;font:bold 15.00px/15.00px 'Liberation Sans',sans-serif;color:#111;white-space:pre;transform:scaleX(0.9200);transform-origin:0 0;">x</div>
<div style="left:278.00px;top:913.10px;width:64.60px;height:28.70px;background:#f0f0f0;"></div>
<div style="left:344.00px;top:913.10px;width:98.20px;height:28.70px;background:#ffffff;"></div>
<div style="left:278.00px;top:940.60px;width:64.60px;height:2.00px;background:#7a7a7a;"></div>
<div style="left:344.00px;top:940.60px;width:98.20px;height:1.50px;background:#cfcfcf;"></div>
<div style="left:306.66px;top:920.40px;font:bold 15.00px/15.00px 'Liberation Sans',sans-serif;color:#111;white-space:pre;transform:scaleX(0.9200);transform-origin:0 0;">y</div>
<div style="left:278.00px;top:941.80px;width:64.60px;height:28.70px;background:#f0f0f0;"></div>
<div style="left:344.00px;top:941.80px;width:98.20px;height:28.70px;background:#ffffff;"></div>
<div style="left:278.00px;top:969.30px;width:64.60px;height:2.00px;background:#7a7a7a;"></div>
<div style="left:344.00px;top:969.30px;width:98.20px;height:1.50px;background:#cfcfcf;"></div>
<div style="left:307.05px;top:949.10px;font:bold 15.00px/15.00px 'Liberation Sans',sans-serif;color:#111;white-space:pre;transform:scaleX(0.9200);transform-origin:0 0;">z</div>
<div style="left:278.00px;top:970.50px;width:64.60px;height:28.70px;background:#f0f0f0;"></div>
<div style="left:344.00px;top:970.50px;width:98.20px;height:28.70px;background:#e0e0e0;"></div>
<div style="left:278.00px;top:998.00px;width:64.60px;height:2.00px;background:#7a7a7a;"></div>
<div style="left:344.00px;top:998.00px;width:98.20px;height:1.50px;background:#cfcfcf;"></div>
<div style="left:306.29px;top:977.80px;font:bold 15.00px/15.00px 'Liberation Sans',sans-serif;color:#111;white-space:pre;transform:scaleX(0.9200);transform-origin:0 0;">L</div>
<div style="left:278.00px;top:999.20px;width:64.60px;height:28.70px;background:#f0f0f0;"></div>
<div style="left:344.00px;top:999.20px;width:98.20px;height:28.70px;background:#e0e0e0;"></div>
<div style="left:278.00px;top:1026.70px;width:64.60px;height:2.00px;background:#7a7a7a;"></div>
<div style="left:344.00px;top:1026.70px;width:98.20px;height:1.50px;background:#cfcfcf;"></div>
<div style="left:306.66px;top:1006.50px;font:bold 15.00px/15.00px 'Liberation Sans',sans-serif;color:#111;white-space:pre;transform:scaleX(0.9200);transform-origin:0 0;">a</div>
<div style="left:278.00px;top:1027.90px;width:64.60px;height:28.70px;background:#f0f0f0;"></div>
<div style="left:344.00px;top:1027.90px;width:98.20px;height:28.70px;background:#e0e0e0;"></div>
<div style="left:278.00px;top:1055.40px;width:64.60px;height:2.00px;background:#7a7a7a;"></div>
<div style="left:344.00px;top:1055.40px;width:98.20px;height:1.50px;background:#cfcfcf;"></div>
<div style="left:306.29px;top:1035.20px;font:bold 15.00px/15.00px 'Liberation Sans',sans-serif;color:#111;white-space:pre;transform:scaleX(0.9200);transform-origin:0 0;">b</div>
<div style="left:278.00px;top:1056.60px;width:64.60px;height:28.70px;background:#f0f0f0;"></div>
<div style="left:344.00px;top:1056.60px;width:98.20px;height:28.70px;background:#ffffff;"></div>
<div style="left:278.00px;top:1084.10px;width:64.60px;height:2.00px;background:#7a7a7a;"></div>
<div style="left:344.00px;top:1084.10px;width:98.20px;height:1.50px;background:#cfcfcf;"></div>
<div style="left:306.29px;top:1063.90px;font:bold 15.00px/15.00px 'Liberation Sans',sans-serif;color:#111;white-space:pre;transform:scaleX(0.9200);transform-origin:0 0;">L</div>
<div style="left:278.00px;top:1085.30px;width:64.60px;height:28.70px;background:#f0f0f0;"></div>
<div style="left:344.00px;top:1085.30px;width:98.20px;height:28.70px;background:#ffffff;"></div>
<div style="left:278.00px;top:1112.80px;width:64.60px;height:2.00px;background:#7a7a7a;"></div>
<div style="left:344.00px;top:1112.80px;width:98.20px;height:1.50px;background:#cfcfcf;"></div>
<div style="left:305.52px;top:1092.60px;font:bold 15.00px/15.00px 'Liberation Sans',sans-serif;color:#111;white-space:pre;transform:scaleX(0.9200);transform-origin:0 0;">C</div>
<div style="left:278.00px;top:1114.00px;width:64.60px;height:28.70px;background:#f0f0f0;"></div>
<div style="left:344.00px;top:1114.00px;width:98.20px;height:28.70px;background:#ffffff;"></div>
<div style="left:278.00px;top:1141.50px;width:64.60px;height:2.00px;background:#7a7a7a;"></div>
<div style="left:344.00px;top:1141.50px;width:98.20px;height:1.50px;background:#cfcfcf;"></div>
<div style="left:305.52px;top:1121.30px;font:bold 15.00px/15.00px 'Liberation Sans',sans-serif;color:#111;white-space:pre;transform:scaleX(0.9200);transform-origin:0 0;">H</div>
<div style="left:278.00px;top:1142.70px;width:64.60px;height:28.70px;background:#f0f0f0;"></div>
<div style="left:344.00px;top:1142.70px;width:98.20px;height:28.70px;background:#e0e0e0;"></div>
<div style="left:278.00px;top:1170.20px;width:64.60px;height:2.00px;background:#7a7a7a;"></div>
<div style="left:344.00px;top:1170.20px;width:98.20px;height:1.50px;background:#cfcfcf;"></div>
<div style="left:306.29px;top:1150.00px;font:bold 15.00px/15.00px 'Liberation Sans',sans-serif;color:#111;white-space:pre;transform:scaleX(0.9200);transform-origin:0 0;">L</div>
<div style="left:278.00px;top:1171.40px;width:64.60px;height:28.70px;background:#f0f0f0;"></div>
<div style="left:344.00px;top:1171.40px;width:98.20px;height:28.70px;background:#e0e0e0;"></div>
<div style="left:278.00px;top:1198.90px;width:64.60px;height:2.00px;background:#7a7a7a;"></div>
<div style="left:344.00px;top:1198.90px;width:98.20px;height:1.50px;background:#cfcfcf;"></div>
<div style="left:304.75px;top:1178.70px;font:bold 15.00px/15.00px 'Liberation Sans',sans-serif;color:#111;white-space:pre;transform:scaleX(0.9200);transform-origin:0 0;">M</div>
<div style="left:278.00px;top:1200.10px;width:64.60px;height:28.70px;background:#f0f0f0;"></div>
<div style="left:344.00px;top:1200.10px;width:98.20px;height:28.70px;background:#e0e0e0;"></div>
<div style="left:278.00px;top:1227.60px;width:64.60px;height:2.00px;background:#7a7a7a;"></div>
<div style="left:344.00px;top:1227.60px;width:98.20px;height:1.50px;background:#cfcfcf;"></div>
<div style="left:305.90px;top:1207.40px;font:bold 15.00px/15.00px 'Liberation Sans',sans-serif;color:#111;white-space:pre;transform:scaleX(0.9200);transform-origin:0 0;">S</div>
<div style="left:342.60px;top:540.00px;width:2.00px;height:688.80px;background:#7a7a7a;"></div>
<div style="left:277.50px;top:1228.80px;width:166.50px;height:107.20px;background:#a0a0a0;"></div>
<div style="left:442.20px;top:540.00px;width:23.80px;height:797.00px;background:#f0f0f0;"></div>
<div style="left:275.00px;top:538.30px;width:191.00px;height:1.70px;background:#808080;"></div>
<svg style="position:absolute;left:448.00px;top:545.00px;" width="14" height="12" viewBox="0 0 14 12"><path d="M2 9h10L7 3z" fill="#a0a0a0"/></svg>
<svg style="position:absolute;left:448.00px;top:1320.00px;" width="14" height="12" viewBox="0 0 14 12"><path d="M2 3h10L7 9z" fill="#a0a0a0"/></svg>
<div style="left:489.00px;top:484.20px;width:2039.00px;height:862.50px;background:#8c8c8c;"></div>
<div style="left:491.0px;top:485.7px;width:2035.0px;height:20.5px;background:linear-gradient(90deg,#e2e9f3,#ebf1f9);border-radius:6px 6px 0 0"></div>
<div style="left:491.00px;top:506.20px;width:2035.00px;height:1.50px;background:#a9aeb5;"></div>
<div style="left:491.00px;top:507.70px;width:2035.00px;height:837.00px;background:#ececec;"></div>
<div style="left:497.80px;top:489.23px;font:bold 14.50px/14.50px 'Liberation Sans',sans-serif;color:#4b4b4b;white-space:pre;transform:scaleX(1.2100);transform-origin:0 0;">Information</div>
<div style="left:495.50px;top:512.40px;width:375.50px;height:26.60px;background:#7d7d7d;"></div>
<div style="left:498.00px;top:515.00px;width:372.00px;height:23.00px;background:#ffffff;"></div>
<div style="left:499.50px;top:516.00px;width:349.00px;height:20.00px;background:#0078d7;"></div>
<div style="left:501.50px;top:518.46px;font:normal 16.00px/16.00px 'Liberation Sans',sans-serif;color:#ffffff;white-space:pre;">RGB Levels</div>
<div style="left:848.50px;top:515.00px;width:21.00px;height:22.50px;background:#efefef;box-shadow:inset -1px -1px 0 #6f6f6f,inset 1px 1px 0 #fff"></div>
<svg style="position:absolute;left:851.00px;top:520.00px;" width="16" height="12" viewBox="0 0 16 12"><path d="M4 3h8l-4 5z" fill="#111"/></svg>
<div style="left:497.50px;top:549.40px;width:2028.30px;height:789.60px;background:#fafafa;"></div>
<div style="left:497.50px;top:549.40px;width:2028.30px;height:2.10px;background:#9a9a9a;"></div>
<div style="left:497.50px;top:549.40px;width:2.00px;height:789.60px;background:#9a9a9a;"></div>
<div style="left:499.50px;top:551.50px;width:2024.00px;height:2.50px;background:#6f6f6f;"></div>
<div style="left:499.50px;top:551.50px;width:3.50px;height:784.50px;background:#6f6f6f;"></div>
<div style="left:499.50px;top:1336.50px;width:2026.30px;height:1.00px;background:#e4e4e4;"></div>
<div style="left:2524.30px;top:551.50px;width:1.00px;height:786.00px;background:#e4e4e4;"></div>
<svg style="position:absolute;left:503.0px;top:554.0px" width="2019.5" height="779.5"><defs><linearGradient id="cbg" x1="0" y1="0" x2="1" y2="0"><stop offset="0" stop-color="#1d1d1d"/><stop offset="0.5" stop-color="#8e8e8e"/><stop offset="1" stop-color="#fdfdfd"/></linearGradient></defs><rect x="0" y="0" width="2019.5" height="779.5" fill="url(#cbg)"/><rect x="200.5" y="0" width="2" height="779.5" fill="#0a4848" fill-opacity="0.78"/><rect x="402.5" y="0" width="2" height="779.5" fill="#0a4848" fill-opacity="0.78"/><rect x="604.5" y="0" width="2" height="779.5" fill="#0a4848" fill-opacity="0.78"/><rect x="806.5" y="0" width="2" height="779.5" fill="#0a4848" fill-opacity="0.78"/><rect x="1008.5" y="0" width="2" height="779.5" fill="#0a4848" fill-opacity="0.78"/><rect x="1210.5" y="0" width="2" height="779.5" fill="#0a4848" fill-opacity="0.78"/><rect x="1412.5" y="0" width="2" height="779.5" fill="#0a4848" fill-opacity="0.78"/><rect x="1614.5" y="0" width="2" height="779.5" fill="#0a4848" fill-opacity="0.78"/><rect x="1816.5" y="0" width="2" height="779.5" fill="#0a4848" fill-opacity="0.78"/><rect x="0" y="38.8" width="2019.5" height="2" fill="#0a4848" fill-opacity="0.72"/><rect x="0" y="77.7" width="2019.5" height="2" fill="#0a4848" fill-opacity="0.72"/><rect x="0" y="116.5" width="2019.5" height="2" fill="#0a4848" fill-opacity="0.72"/><rect x="0" y="155.4" width="2019.5" height="2" fill="#0a4848" fill-opacity="0.72"/><rect x="0" y="194.2" width="2019.5" height="2" fill="#0a4848" fill-opacity="0.72"/><rect x="0" y="233.0" width="2019.5" height="2" fill="#0a4848" fill-opacity="0.72"/><rect x="0" y="271.9" width="2019.5" height="2" fill="#0a4848" fill-opacity="0.72"/><rect x="0" y="310.7" width="2019.5" height="2" fill="#0a4848" fill-opacity="0.72"/><rect x="0" y="349.6" width="2019.5" height="2" fill="#0a4848" fill-opacity="0.72"/><rect x="0" y="466.8" width="2019.5" height="2" fill="#0a4848" fill-opacity="0.72"/><rect x="0" y="545.0" width="2019.5" height="2" fill="#0a4848" fill-opacity="0.72"/><rect x="0" y="623.2" width="2019.5" height="2" fill="#0a4848" fill-opacity="0.72"/><rect x="0" y="701.0" width="2019.5" height="2" fill="#0a4848" fill-opacity="0.72"/><rect x="0" y="0" width="1.5" height="779.5" fill="#0f3f3f"/></svg>
<div style="left:504.00px;top:563.64px;font:normal 25.50px/25.50px 'Liberation Serif',serif;color:#dcdcdc;white-space:pre;">140%</div>
<div style="left:504.00px;top:602.49px;font:normal 25.50px/25.50px 'Liberation Serif',serif;color:#dcdcdc;white-space:pre;">130%</div>
<div style="left:504.00px;top:641.34px;font:normal 25.50px/25.50px 'Liberation Serif',serif;color:#dcdcdc;white-space:pre;">120%</div>
<div style="left:504.00px;top:680.19px;font:normal 25.50px/25.50px 'Liberation Serif',serif;color:#dcdcdc;white-space:pre;">110%</div>
<div style="left:504.00px;top:719.04px;font:normal 25.50px/25.50px 'Liberation Serif',serif;color:#dcdcdc;white-space:pre;">100%</div>
<div style="left:504.00px;top:757.89px;font:normal 25.50px/25.50px 'Liberation Serif',serif;color:#dcdcdc;white-space:pre;">90%</div>
<div style="left:504.00px;top:796.74px;font:normal 25.50px/25.50px 'Liberation Serif',serif;color:#dcdcdc;white-space:pre;">80%</div>
<div style="left:504.00px;top:835.59px;font:normal 25.50px/25.50px 'Liberation Serif',serif;color:#dcdcdc;white-space:pre;">70%</div>
<div style="left:504.00px;top:874.44px;font:normal 25.50px/25.50px 'Liberation Serif',serif;color:#dcdcdc;white-space:pre;">60%</div>
<div style="left:504.00px;top:992.24px;font:normal 25.50px/25.50px 'Liberation Serif',serif;color:#dcdcdc;white-space:pre;">8</div>
<div style="left:504.00px;top:1069.84px;font:normal 25.50px/25.50px 'Liberation Serif',serif;color:#dcdcdc;white-space:pre;">6</div>
<div style="left:504.00px;top:1148.14px;font:normal 25.50px/25.50px 'Liberation Serif',serif;color:#dcdcdc;white-space:pre;">4</div>
<div style="left:504.00px;top:1226.14px;font:normal 25.50px/25.50px 'Liberation Serif',serif;color:#dcdcdc;white-space:pre;">2</div>
<div style="left:705.00px;top:916.10px;font:normal 24.00px/24.00px 'Liberation Serif',serif;color:#e6e6e6;white-space:pre;transform:scaleX(1.0719);transform-origin:0 0;">10% White</div>
<div style="left:705.00px;top:1306.10px;font:normal 24.00px/24.00px 'Liberation Serif',serif;color:#e6e6e6;white-space:pre;transform:scaleX(1.0719);transform-origin:0 0;">10% White</div>
<div style="left:907.00px;top:916.10px;font:normal 24.00px/24.00px 'Liberation Serif',serif;color:#e0e0e0;white-space:pre;transform:scaleX(1.0719);transform-origin:0 0;">20% White</div>
<div style="left:907.00px;top:1306.10px;font:normal 24.00px/24.00px 'Liberation Serif',serif;color:#e0e0e0;white-space:pre;transform:scaleX(1.0719);transform-origin:0 0;">20% White</div>
<div style="left:1109.00px;top:916.10px;font:normal 24.00px/24.00px 'Liberation Serif',serif;color:#d8d8d8;white-space:pre;transform:scaleX(1.0719);transform-origin:0 0;">30% White</div>
<div style="left:1109.00px;top:1306.10px;font:normal 24.00px/24.00px 'Liberation Serif',serif;color:#d8d8d8;white-space:pre;transform:scaleX(1.0719);transform-origin:0 0;">30% White</div>
<div style="left:1311.00px;top:916.10px;font:normal 24.00px/24.00px 'Liberation Serif',serif;color:#a8a8a8;white-space:pre;transform:scaleX(1.0719);transform-origin:0 0;">40% White</div>
<div style="left:1311.00px;top:1306.10px;font:normal 24.00px/24.00px 'Liberation Serif',serif;color:#a8a8a8;white-space:pre;transform:scaleX(1.0719);transform-origin:0 0;">40% White</div>
<div style="left:1513.00px;top:916.10px;font:normal 24.00px/24.00px 'Liberation Serif',serif;color:#8c8c8c;white-space:pre;transform:scaleX(1.0719);transform-origin:0 0;">50% White</div>
<div style="left:1513.00px;top:1306.10px;font:normal 24.00px/24.00px 'Liberation Serif',serif;color:#8c8c8c;white-space:pre;transform:scaleX(1.0719);transform-origin:0 0;">50% White</div>
<div style="left:1715.00px;top:916.10px;font:normal 24.00px/24.00px 'Liberation Serif',serif;color:#5a5a5a;white-space:pre;transform:scaleX(1.0719);transform-origin:0 0;">60% White</div>
<div style="left:1715.00px;top:1306.10px;font:normal 24.00px/24.00px 'Liberation Serif',serif;color:#5a5a5a;white-space:pre;transform:scaleX(1.0719);transform-origin:0 0;">60% White</div>
<div style="left:1917.00px;top:916.10px;font:normal 24.00px/24.00px 'Liberation Serif',serif;color:#555555;white-space:pre;transform:scaleX(1.0719);transform-origin:0 0;">70% White</div>
<div style="left:1917.00px;top:1306.10px;font:normal 24.00px/24.00px 'Liberation Serif',serif;color:#555555;white-space:pre;transform:scaleX(1.0719);transform-origin:0 0;">70% White</div>
<div style="left:2119.00px;top:916.10px;font:normal 24.00px/24.00px 'Liberation Serif',serif;color:#4f4f4f;white-space:pre;transform:scaleX(1.0719);transform-origin:0 0;">80% White</div>
<div style="left:2119.00px;top:1306.10px;font:normal 24.00px/24.00px 'Liberation Serif',serif;color:#4f4f4f;white-space:pre;transform:scaleX(1.0719);transform-origin:0 0;">80% White</div>
<div style="left:2321.00px;top:916.10px;font:normal 24.00px/24.00px 'Liberation Serif',serif;color:#404040;white-space:pre;transform:scaleX(1.0719);transform-origin:0 0;">90% White</div>
<div style="left:2321.00px;top:1306.10px;font:normal 24.00px/24.00px 'Liberation Serif',serif;color:#404040;white-space:pre;transform:scaleX(1.0719);transform-origin:0 0;">90% White</div>
<div style="left:1399.00px;top:560.73px;font:normal 14.50px/14.50px 'Liberation Sans',sans-serif;color:#d8d820;white-space:pre;transform:scaleX(1.0204);transform-origin:0 0;">Gray Scale Balance w/gamma</div>
<div style="left:2317.00px;top:1264.57px;font:bold 20.00px/20.00px 'Liberation Sans',sans-serif;color:#a0a0a0;white-space:pre;">hcfr.sourceforge.net</div>
<svg style="position:absolute;left:504.00px;top:746.00px;" width="348" height="6" viewBox="0 0 348 6"><path d="M0 3.4H348" stroke="#f0f0f0" stroke-width="2" stroke-dasharray="7 8"/></svg>
<div style="left:503.00px;top:742.00px;width:4.50px;height:11.00px;background:#f4f4f4;"></div>
<svg style="position:absolute;left:503.0px;top:554.0px" width="2019.5" height="779.5"><polyline points="91.0,216.0 192.3,187.0 293.6,189.6 394.9,187.0 496.2,188.4 597.5,193.0 698.8,190.7 800.1,201.0 901.4,195.0 1002.7,188.5 1104.0,186.0 1205.3,189.7 1306.6,192.0 1407.9,190.0 1509.2,192.0 1610.5,192.0 1711.8,193.5 1813.1,190.0 1914.4,194.0 2015.7,196.0" fill="none" stroke="#ff0000" stroke-width="2.9"/><rect x="86.0" y="211.0" width="10" height="10" fill="#ff0000"/><rect x="187.3" y="182.0" width="10" height="10" fill="#ff0000"/><rect x="288.6" y="184.6" width="10" height="10" fill="#ff0000"/><rect x="389.9" y="182.0" width="10" height="10" fill="#ff0000"/><rect x="491.2" y="183.4" width="10" height="10" fill="#ff0000"/><rect x="592.5" y="188.0" width="10" height="10" fill="#ff0000"/><rect x="693.8" y="185.7" width="10" height="10" fill="#ff0000"/><rect x="795.1" y="196.0" width="10" height="10" fill="#ff0000"/><rect x="896.4" y="190.0" width="10" height="10" fill="#ff0000"/><rect x="997.7" y="183.5" width="10" height="10" fill="#ff0000"/><rect x="1099.0" y="181.0" width="10" height="10" fill="#ff0000"/><rect x="1200.3" y="184.7" width="10" height="10" fill="#ff0000"/><rect x="1301.6" y="187.0" width="10" height="10" fill="#ff0000"/><rect x="1402.9" y="185.0" width="10" height="10" fill="#ff0000"/><rect x="1504.2" y="187.0" width="10" height="10" fill="#ff0000"/><rect x="1605.5" y="187.0" width="10" height="10" fill="#ff0000"/><rect x="1706.8" y="188.5" width="10" height="10" fill="#ff0000"/><rect x="1808.1" y="185.0" width="10" height="10" fill="#ff0000"/><rect x="1909.4" y="189.0" width="10" height="10" fill="#ff0000"/><rect x="2010.7" y="191.0" width="10" height="10" fill="#ff0000"/><polyline points="91.0,224.7 192.3,204.0 293.6,192.0 394.9,189.6 496.2,198.0 597.5,192.0 698.8,194.0 800.1,196.0 901.4,198.5 1002.7,193.8 1104.0,190.7 1205.3,192.0 1306.6,191.5 1407.9,192.5 1509.2,193.0 1610.5,193.0 1711.8,194.0 1813.1,194.0 1914.4,197.0 2015.7,194.0" fill="none" stroke="#00ff00" stroke-width="2.9"/><rect x="86.0" y="219.7" width="10" height="10" fill="#00ff00"/><rect x="187.3" y="199.0" width="10" height="10" fill="#00ff00"/><rect x="288.6" y="187.0" width="10" height="10" fill="#00ff00"/><rect x="389.9" y="184.6" width="10" height="10" fill="#00ff00"/><rect x="491.2" y="193.0" width="10" height="10" fill="#00ff00"/><rect x="592.5" y="187.0" width="10" height="10" fill="#00ff00"/><rect x="693.8" y="189.0" width="10" height="10" fill="#00ff00"/><rect x="795.1" y="191.0" width="10" height="10" fill="#00ff00"/><rect x="896.4" y="193.5" width="10" height="10" fill="#00ff00"/><rect x="997.7" y="188.8" width="10" height="10" fill="#00ff00"/><rect x="1099.0" y="185.7" width="10" height="10" fill="#00ff00"/><rect x="1200.3" y="187.0" width="10" height="10" fill="#00ff00"/><rect x="1301.6" y="186.5" width="10" height="10" fill="#00ff00"/><rect x="1402.9" y="187.5" width="10" height="10" fill="#00ff00"/><rect x="1504.2" y="188.0" width="10" height="10" fill="#00ff00"/><rect x="1605.5" y="188.0" width="10" height="10" fill="#00ff00"/><rect x="1706.8" y="189.0" width="10" height="10" fill="#00ff00"/><rect x="1808.1" y="189.0" width="10" height="10" fill="#00ff00"/><rect x="1909.4" y="192.0" width="10" height="10" fill="#00ff00"/><rect x="2010.7" y="189.0" width="10" height="10" fill="#00ff00"/><polyline points="91.0,168.5 192.3,194.5 293.6,188.4 394.9,197.0 496.2,190.8 597.5,195.4 698.8,197.0 800.1,194.8 901.4,193.0 1002.7,197.0 1104.0,195.4 1205.3,198.5 1306.6,193.0 1407.9,194.5 1509.2,195.3 1610.5,194.5 1711.8,194.5 1813.1,194.5 1914.4,193.6 2015.7,194.5" fill="none" stroke="#0000ff" stroke-width="2.9"/><rect x="86.0" y="163.5" width="10" height="10" fill="#0000ff"/><rect x="187.3" y="189.5" width="10" height="10" fill="#0000ff"/><rect x="288.6" y="183.4" width="10" height="10" fill="#0000ff"/><rect x="389.9" y="192.0" width="10" height="10" fill="#0000ff"/><rect x="491.2" y="185.8" width="10" height="10" fill="#0000ff"/><rect x="592.5" y="190.4" width="10" height="10" fill="#0000ff"/><rect x="693.8" y="192.0" width="10" height="10" fill="#0000ff"/><rect x="795.1" y="189.8" width="10" height="10" fill="#0000ff"/><rect x="896.4" y="188.0" width="10" height="10" fill="#0000ff"/><rect x="997.7" y="192.0" width="10" height="10" fill="#0000ff"/><rect x="1099.0" y="190.4" width="10" height="10" fill="#0000ff"/><rect x="1200.3" y="193.5" width="10" height="10" fill="#0000ff"/><rect x="1301.6" y="188.0" width="10" height="10" fill="#0000ff"/><rect x="1402.9" y="189.5" width="10" height="10" fill="#0000ff"/><rect x="1504.2" y="190.3" width="10" height="10" fill="#0000ff"/><rect x="1605.5" y="189.5" width="10" height="10" fill="#0000ff"/><rect x="1706.8" y="189.5" width="10" height="10" fill="#0000ff"/><rect x="1808.1" y="189.5" width="10" height="10" fill="#0000ff"/><rect x="1909.4" y="188.6" width="10" height="10" fill="#0000ff"/><rect x="2010.7" y="189.5" width="10" height="10" fill="#0000ff"/><polyline points="91.0,773.6 192.3,768.0 293.6,774.8 394.9,772.4 496.2,762.7 597.5,770.4 698.8,773.5 800.1,769.4 901.4,775.7 1002.7,767.3 1104.0,764.0 1205.3,761.6 1306.6,773.5 1407.9,772.3 1509.2,770.2 1610.5,774.9 1711.8,775.4 1813.1,774.9 1914.4,772.3 2015.7,765.6" fill="none" stroke="#ff00ff" stroke-width="2.6"/><rect x="86.0" y="768.6" width="10" height="10" fill="#ff00ff"/><rect x="187.3" y="763.0" width="10" height="10" fill="#ff00ff"/><rect x="288.6" y="769.8" width="10" height="10" fill="#ff00ff"/><rect x="389.9" y="767.4" width="10" height="10" fill="#ff00ff"/><rect x="491.2" y="757.7" width="10" height="10" fill="#ff00ff"/><rect x="592.5" y="765.4" width="10" height="10" fill="#ff00ff"/><rect x="693.8" y="768.5" width="10" height="10" fill="#ff00ff"/><rect x="795.1" y="764.4" width="10" height="10" fill="#ff00ff"/><rect x="896.4" y="770.7" width="10" height="10" fill="#ff00ff"/><rect x="997.7" y="762.3" width="10" height="10" fill="#ff00ff"/><rect x="1099.0" y="759.0" width="10" height="10" fill="#ff00ff"/><rect x="1200.3" y="756.6" width="10" height="10" fill="#ff00ff"/><rect x="1301.6" y="768.5" width="10" height="10" fill="#ff00ff"/><rect x="1402.9" y="767.3" width="10" height="10" fill="#ff00ff"/><rect x="1504.2" y="765.2" width="10" height="10" fill="#ff00ff"/><rect x="1605.5" y="769.9" width="10" height="10" fill="#ff00ff"/><rect x="1706.8" y="770.4" width="10" height="10" fill="#ff00ff"/><rect x="1808.1" y="769.9" width="10" height="10" fill="#ff00ff"/><rect x="1909.4" y="767.3" width="10" height="10" fill="#ff00ff"/><rect x="2010.7" y="760.6" width="10" height="10" fill="#ff00ff"/></svg>
<div style="left:0.00px;top:1378.00px;width:2560.00px;height:38.00px;background:#f0f0f0;"></div>
<div style="left:90.00px;top:1379.50px;width:2470.00px;height:1.50px;background:#151515;"></div>
<div style="left:0.00px;top:1380.30px;width:105.00px;height:35.70px;background:#151515;"></div>
<div style="left:1.50px;top:1382.00px;width:32.00px;height:32.50px;background:#f0f0f0;box-shadow:inset -2px -2px 0 #8a8a8a,inset 1px 1px 0 #fff"></div>
<div style="left:35.00px;top:1382.00px;width:32.50px;height:32.50px;background:#f0f0f0;box-shadow:inset -2px -2px 0 #8a8a8a,inset 1px 1px 0 #fff"></div>
<div style="left:69.00px;top:1382.00px;width:33.50px;height:32.50px;background:#f0f0f0;box-shadow:inset -2px -2px 0 #8a8a8a,inset 1px 1px 0 #fff"></div>
<svg style="position:absolute;left:8.00px;top:1388.00px;" width="20" height="20" viewBox="0 0 20 20"><path d="M5.5 5.5L14.5 14.5M14.5 5.5L5.5 14.5" stroke="#111" stroke-width="1.8"/></svg>
<svg style="position:absolute;left:42.00px;top:1388.00px;" width="20" height="20" viewBox="0 0 20 20"><path d="M12.5 6L8 10L12.5 14" fill="none" stroke="#111" stroke-width="2.2"/></svg>
<svg style="position:absolute;left:76.00px;top:1388.00px;" width="20" height="20" viewBox="0 0 20 20"><path d="M8 6L12.5 10L8 14" fill="none" stroke="#111" stroke-width="2.2"/></svg>
<svg style="position:absolute;left:0;top:1379" width="900" height="38"><path d="M259.0 1.5L275.5 35.5L428.5 35.5L445.0 1.5" fill="#f0f0f0" stroke="#1a1a1a" stroke-width="1.5"/><path d="M427.0 1.5L443.5 35.5L555.5 35.5L572.0 1.5" fill="#f0f0f0" stroke="#1a1a1a" stroke-width="1.5"/><path d="M555.0 1.5L571.5 35.5L820.5 35.5L837.0 1.5" fill="#f0f0f0" stroke="#1a1a1a" stroke-width="1.5"/><path d="M104 0L121 35.5L259.5 35.5L276 1.5" fill="#ffffff" stroke="#1a1a1a" stroke-width="1.5"/><rect x="105" y="0" width="170" height="1.6" fill="#ffffff"/></svg>
<div style="left:128.00px;top:1384.64px;font:bold 27.00px/27.00px 'Liberation Sans',sans-serif;color:#000;white-space:pre;transform:scaleX(1.0196);transform-origin:0 0;">Measures</div>
<div style="left:285.30px;top:1384.64px;font:normal 27.00px/27.00px 'Liberation Sans',sans-serif;color:#000;white-space:pre;transform:scaleX(0.9911);transform-origin:0 0;">Luminance</div>
<div style="left:451.30px;top:1384.64px;font:normal 27.00px/27.00px 'Liberation Sans',sans-serif;color:#000;white-space:pre;transform:scaleX(0.9969);transform-origin:0 0;">Gamma</div>
<div style="left:586.00px;top:1384.64px;font:normal 27.00px/27.00px 'Liberation Sans',sans-serif;color:#000;white-space:pre;transform:scaleX(1.0066);transform-origin:0 0;">Color temperature</div>
<svg style="position:absolute;left:2348.00px;top:1382.00px;" width="20" height="20" viewBox="0 0 20 20"><path d="M1 1h16v12h-2l-1 5h-3l-1-4h-2l-1 4H4L3 13H1z" fill="#7a7a00" stroke="#000" stroke-width="1.2"/><rect x="11" y="14" width="6" height="4" fill="#f0f000"/><path d="M5 5h7v5H5z" fill="#f02020"/><path d="M4 6q3-3 6 0" stroke="#fff" stroke-width="1.3" fill="none"/></svg>
<div style="left:2467.50px;top:1383.50px;width:15.00px;height:15.00px;background:#ffffff;box-shadow:inset 2px 2px 0 #7b7b7b,inset -1px -1px 0 #e6e6e6"></div>
<div style="left:2490.00px;top:1384.80px;font:normal 15.00px/15.00px 'Liberation Sans',sans-serif;color:#111;white-space:pre;transform:scaleX(0.9102);transform-origin:0 0;">Reference</div>
<div style="left:0;top:1416px;width:2560px;height:22px;background:linear-gradient(90deg,#e3eaf4,#edf2f9)"></div>
<div style="left:0.00px;top:1438.00px;width:2560.00px;height:2.00px;background:#222;"></div>
<div style="left:3.50px;top:1421.80px;font:normal 15.00px/15.00px 'Liberation Sans',sans-serif;color:#111;white-space:pre;transform:scaleX(0.8995);transform-origin:0 0;">Ready</div>
<div style="left:2337.5px;top:1418px;width:93.5px;height:20px;border-left:1.5px solid #a7bcd6;border-top:1.5px solid #a7bcd6;background:#eef3fa"></div>
<div style="left:2435.0px;top:1418px;width:35.0px;height:20px;border-left:1.5px solid #a7bcd6;border-top:1.5px solid #a7bcd6;background:#eef3fa"></div>
<div style="left:2474.0px;top:1418px;width:41.0px;height:20px;border-left:1.5px solid #a7bcd6;border-top:1.5px solid #a7bcd6;background:#eef3fa"></div>
<div style="left:2519.0px;top:1418px;width:39.0px;height:20px;border-left:1.5px solid #a7bcd6;border-top:1.5px solid #a7bcd6;background:#eef3fa"></div>
<div style="left:2476.50px;top:1422.30px;font:normal 15.00px/15.00px 'Liberation Sans',sans-serif;color:#111;white-space:pre;transform:scaleX(0.9808);transform-origin:0 0;">NUM</div>
</body></html>
